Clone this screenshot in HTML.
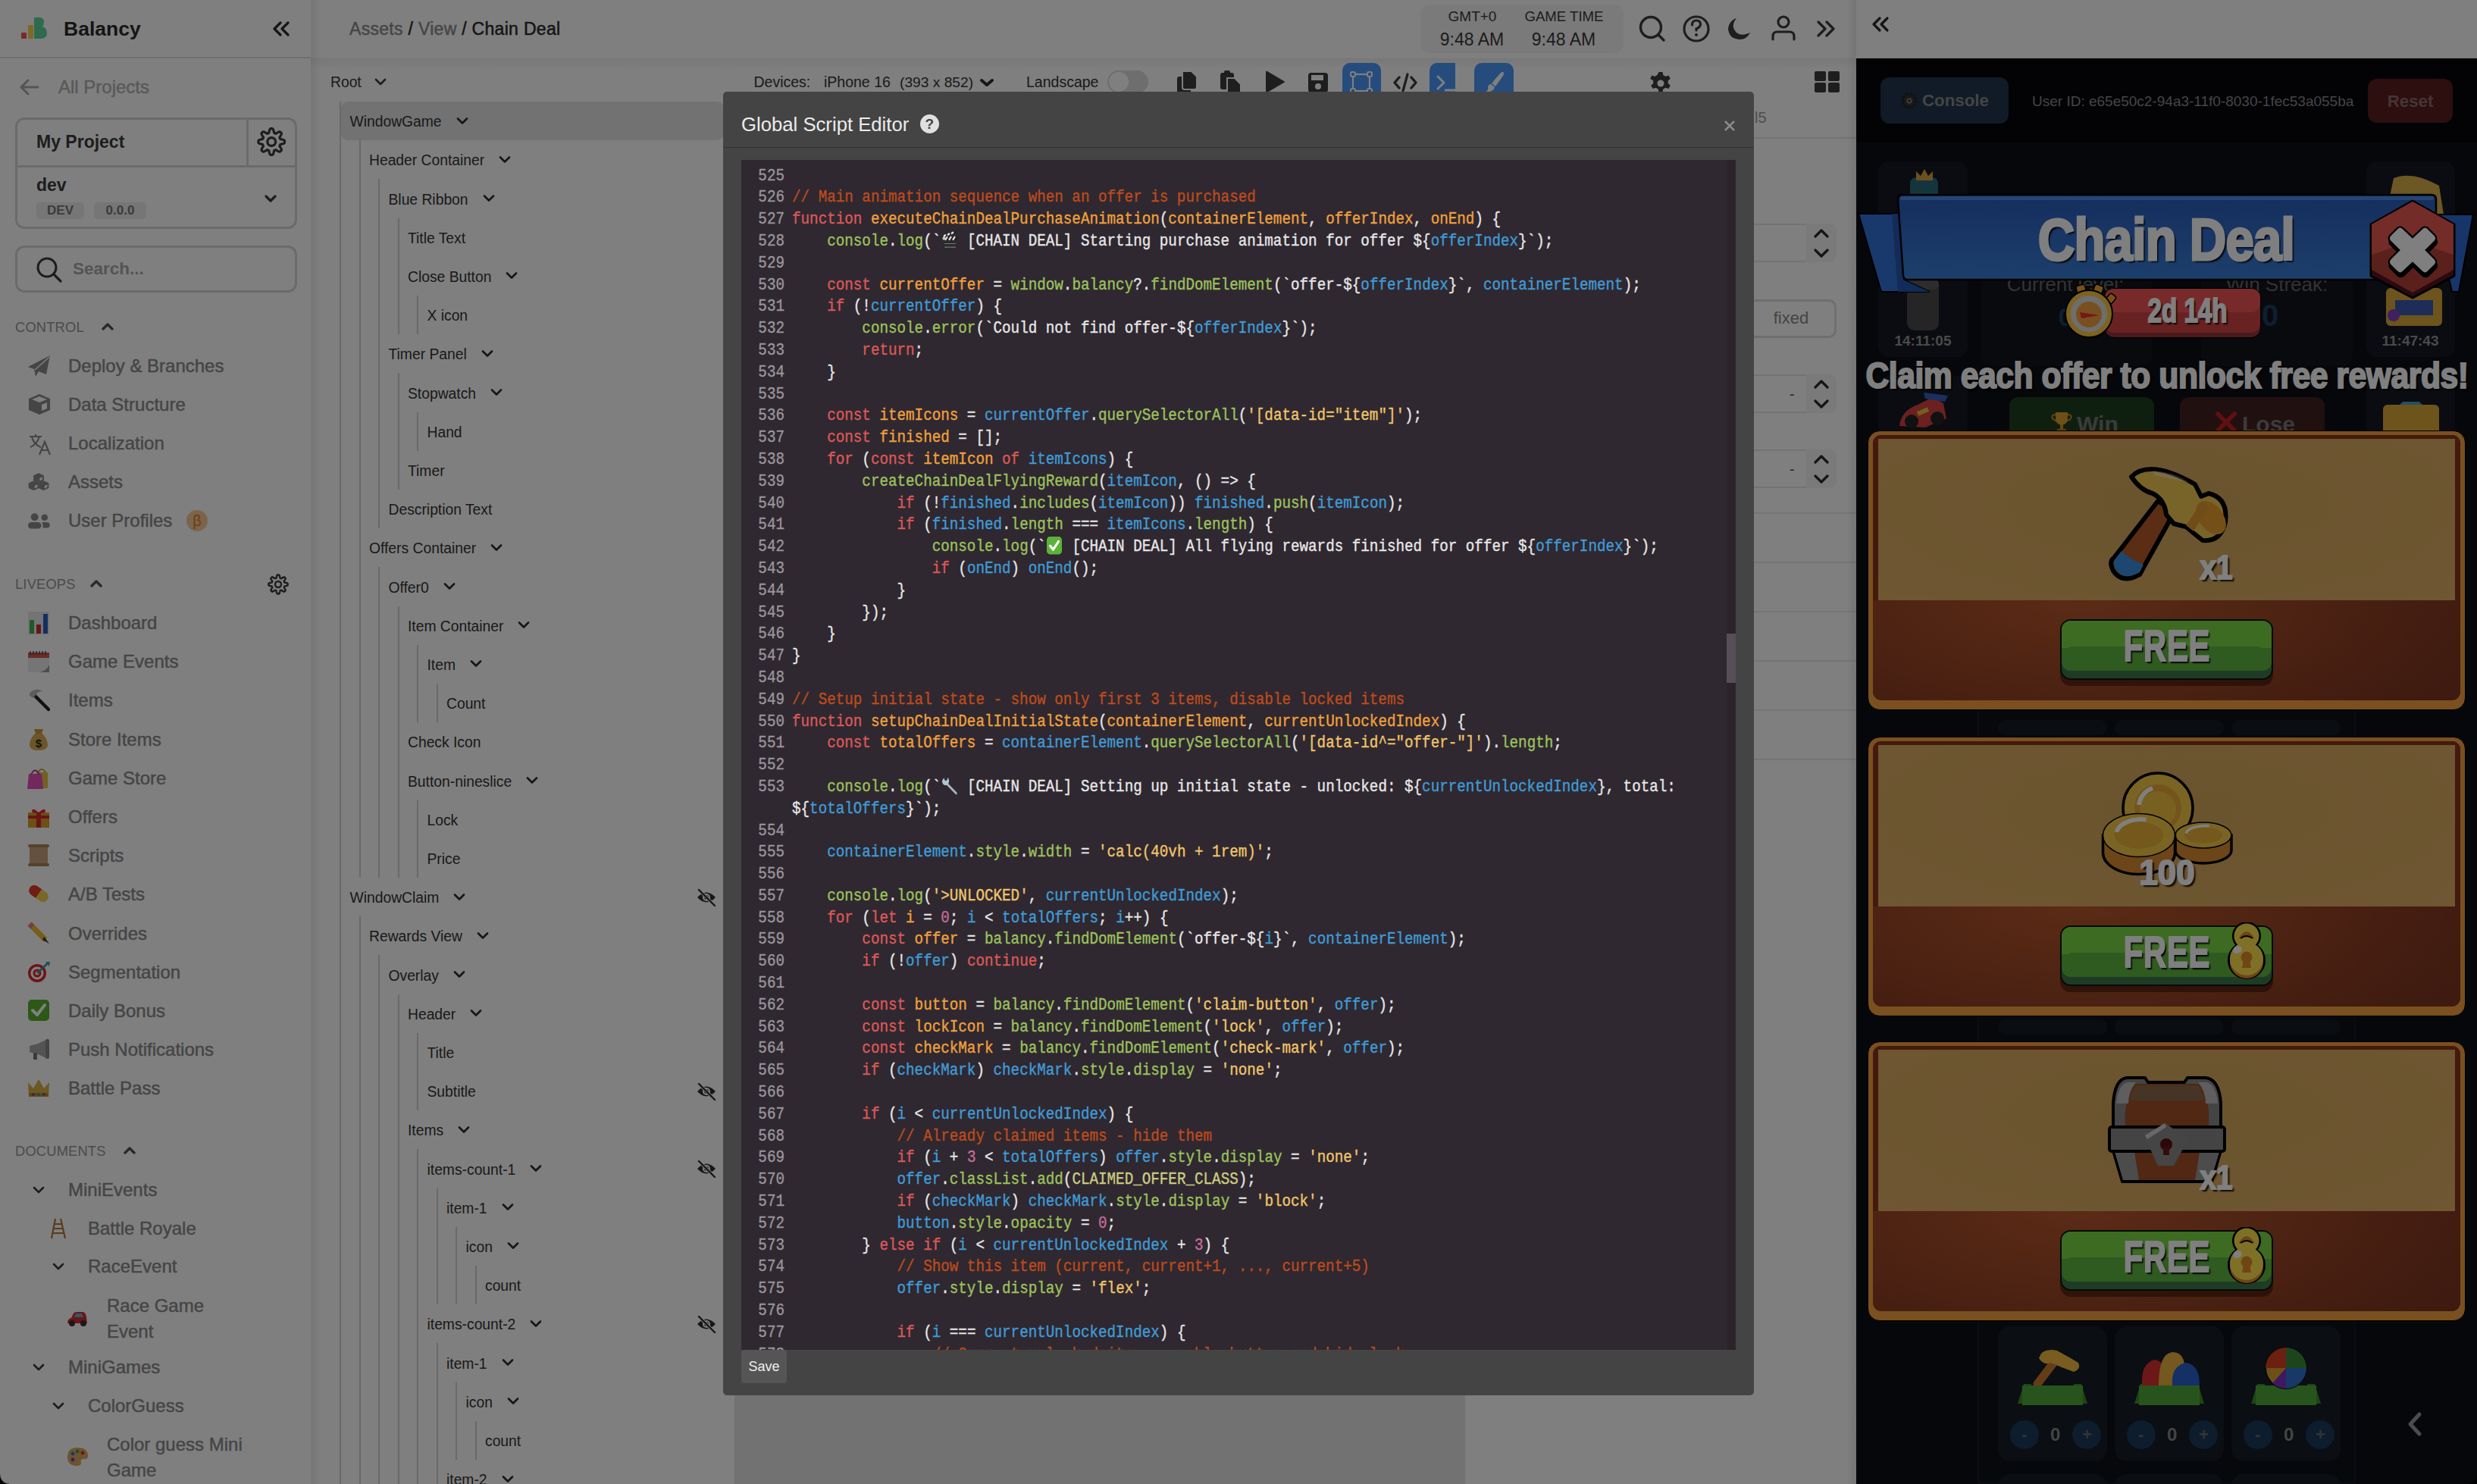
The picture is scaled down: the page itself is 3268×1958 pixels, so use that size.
<!DOCTYPE html>
<html><head><meta charset="utf-8">
<style>
*{box-sizing:border-box;margin:0;padding:0}
html,body{width:3268px;height:1958px;overflow:hidden;background:#000}
body{position:relative;font-family:"Liberation Sans",sans-serif;color:#333}
.abs{position:absolute}
/* modal */
#overlay{position:absolute;left:0;top:0;width:3268px;height:1958px;background:rgba(0,0,0,.5)}
#modal{position:absolute;left:954px;top:121px;width:1360px;height:1720px;background:#444;border-radius:5px}
#mhead{position:absolute;left:0;top:0;width:1360px;height:74px;border-bottom:1.5px solid #333}
#mtitle{position:absolute;left:24px;top:27.6px;font-size:25.7px;line-height:31px;color:#ececec;white-space:nowrap}
#mhelp{position:absolute;left:259.7px;top:29.7px;width:25px;height:25px;border-radius:50%;background:#e0e0e0;color:#444;font-weight:700;font-size:19px;line-height:26px;text-align:center}
#mclose{position:absolute;left:1320px;top:37px;width:16px;height:16px}
#code{position:absolute;left:24px;top:90px;width:1312px;height:1570px;background:#2f2830;overflow:hidden}
#cscroll{position:absolute;left:1300px;top:0;width:12px;height:1570px;background:#2b242a}
#cthumb{position:absolute;left:1300px;top:625px;width:12px;height:65px;background:#564f57}
#lines{position:absolute;left:0;top:6.6px;width:1300px}
.cl{position:relative;height:28.8px;line-height:28.8px;transform:scaleY(1.17);font-family:"Liberation Mono",monospace;font-size:19.24px;color:#e6e6e6;white-space:pre;-webkit-text-stroke:0.35px}
.ln{position:absolute;left:0;width:57px;text-align:right;color:#9b949c}
.cx{position:absolute;left:67px}
.tc{color:#bd4b1d}.tk{color:#dc5858}.td{color:#f0a03c}.tf{color:#9cc15c}.tv{color:#3f9bd6}.ts{color:#f0c46a}.tn{color:#c46b98}.tC{color:#cdcb80}
.em{display:inline-block;width:23.09px;height:20px;vertical-align:-3px;text-align:center}
.em svg{display:block;margin:0 auto}
#save{position:absolute;left:24px;top:1660px;width:60px;height:44px;background:#555;border-radius:4px;color:#eee;font-size:18px;line-height:44px;text-align:center}
</style></head>
<body>
<style>
#sb{position:absolute;left:0;top:0;width:410px;height:1958px;background:#fff;overflow:hidden}
#sb .t{position:absolute;white-space:nowrap;font-size:24px;line-height:30px;color:#8a8a8a;-webkit-text-stroke:0.45px}
#sb .hd{position:absolute;white-space:nowrap;font-size:18.3px;line-height:24px;color:#969696;letter-spacing:0.2px}
#sb .ic{position:absolute;width:30px;height:30px}
.box{position:absolute;border:3px solid #d6d6d6;border-radius:12px}
.badge{position:absolute;height:22px;background:#ececec;border-radius:5px;font-weight:700;font-size:17px;line-height:22px;color:#777;text-align:center}
</style>
<div id="sb">
  <div class="abs" style="left:0;top:75px;width:410px;height:2px;background:#dedede"></div>
  <!-- logo -->
  <div class="abs" style="left:28px;top:43px;width:7px;height:8px;background:#f25558;border-radius:1px"></div>
  <div class="abs" style="left:37px;top:33px;width:6.5px;height:18px;background:#ffd04c;border-radius:1px"></div>
  <svg class="abs" style="left:45px;top:23px" width="18" height="28" viewBox="0 0 18 28"><path d="M0 1 Q0 0 1 0 L7 0 Q13 0 13 6 Q13 10 11 12 Q17 14 17 20 Q17 28 9 28 L1 28 Q0 28 0 27Z" fill="#5ed49e"/></svg>
  <div class="abs" style="left:84px;top:21px;font-size:26.5px;line-height:34px;font-weight:700;color:#2a2a2a;white-space:nowrap">Balancy</div>
  <svg class="abs" style="left:359px;top:28px" width="24" height="20" viewBox="0 0 24 20"><path d="M11 2 L3 10 L11 18 M21 2 L13 10 L21 18" stroke="#2a2a2a" stroke-width="3.2" fill="none" stroke-linecap="round" stroke-linejoin="round"/></svg>
  <!-- all projects -->
  <svg class="abs" style="left:26px;top:104px" width="26" height="22" viewBox="0 0 26 22"><path d="M24 11 H3 M11 2 L2 11 L11 20" stroke="#aaa" stroke-width="3" fill="none" stroke-linecap="round" stroke-linejoin="round"/></svg>
  <div class="t" style="left:77px;top:100px;color:#b2b2b2">All Projects</div>
  <!-- project box -->
  <div class="box" style="left:20px;top:155px;width:372px;height:147px"></div>
  <div class="abs" style="left:20px;top:218px;width:372px;height:3px;background:#d6d6d6"></div>
  <div class="abs" style="left:325px;top:155px;width:3px;height:64px;background:#d6d6d6"></div>
  <div class="abs" style="left:48px;top:172px;font-size:23px;line-height:30px;font-weight:700;color:#3a3a3a;white-space:nowrap">My Project</div>
  <svg class="abs" style="left:338px;top:167px" width="40" height="40" viewBox="0 0 40 40"><path d="M20.20 2.70 L20.65 2.71 L21.11 2.72 L21.56 2.75 L21.98 3.05 L22.35 3.70 L22.66 4.44 L22.94 5.23 L23.17 6.04 L23.36 6.83 L23.53 7.58 L23.68 8.25 L23.91 8.59 L24.21 8.69 L24.50 8.80 L24.79 8.91 L25.08 9.04 L25.37 9.17 L25.65 9.31 L26.05 9.23 L26.63 8.86 L27.28 8.45 L27.98 8.03 L28.71 7.62 L29.46 7.25 L30.21 6.96 L30.93 6.75 L31.44 6.84 L31.78 7.14 L32.11 7.45 L32.43 7.77 L32.75 8.09 L33.06 8.42 L33.36 8.76 L33.45 9.27 L33.24 9.99 L32.95 10.74 L32.58 11.49 L32.17 12.22 L31.75 12.92 L31.34 13.57 L30.97 14.15 L30.89 14.55 L31.03 14.83 L31.16 15.12 L31.29 15.41 L31.40 15.70 L31.51 15.99 L31.61 16.29 L31.95 16.52 L32.62 16.67 L33.37 16.84 L34.16 17.03 L34.97 17.26 L35.76 17.54 L36.50 17.85 L37.15 18.22 L37.45 18.64 L37.48 19.09 L37.49 19.55 L37.50 20.00 L37.49 20.45 L37.48 20.91 L37.45 21.36 L37.15 21.78 L36.50 22.15 L35.76 22.46 L34.97 22.74 L34.16 22.97 L33.37 23.16 L32.62 23.33 L31.95 23.48 L31.61 23.71 L31.51 24.01 L31.40 24.30 L31.29 24.59 L31.16 24.88 L31.03 25.17 L30.89 25.45 L30.97 25.85 L31.34 26.43 L31.75 27.08 L32.17 27.78 L32.58 28.51 L32.95 29.26 L33.24 30.01 L33.45 30.73 L33.36 31.24 L33.06 31.58 L32.75 31.91 L32.43 32.23 L32.11 32.55 L31.78 32.86 L31.44 33.16 L30.93 33.25 L30.21 33.04 L29.46 32.75 L28.71 32.38 L27.98 31.97 L27.28 31.55 L26.63 31.14 L26.05 30.77 L25.65 30.69 L25.37 30.83 L25.08 30.96 L24.79 31.09 L24.50 31.20 L24.21 31.31 L23.91 31.41 L23.68 31.75 L23.53 32.42 L23.36 33.17 L23.17 33.96 L22.94 34.77 L22.66 35.56 L22.35 36.30 L21.98 36.95 L21.56 37.25 L21.11 37.28 L20.65 37.29 L20.20 37.30 L19.75 37.29 L19.29 37.28 L18.84 37.25 L18.42 36.95 L18.05 36.30 L17.74 35.56 L17.46 34.77 L17.23 33.96 L17.04 33.17 L16.87 32.42 L16.72 31.75 L16.49 31.41 L16.19 31.31 L15.90 31.20 L15.61 31.09 L15.32 30.96 L15.03 30.83 L14.75 30.69 L14.35 30.77 L13.77 31.14 L13.12 31.55 L12.42 31.97 L11.69 32.38 L10.94 32.75 L10.19 33.04 L9.47 33.25 L8.96 33.16 L8.62 32.86 L8.29 32.55 L7.97 32.23 L7.65 31.91 L7.34 31.58 L7.04 31.24 L6.95 30.73 L7.16 30.01 L7.45 29.26 L7.82 28.51 L8.23 27.78 L8.65 27.08 L9.06 26.43 L9.43 25.85 L9.51 25.45 L9.37 25.17 L9.24 24.88 L9.11 24.59 L9.00 24.30 L8.89 24.01 L8.79 23.71 L8.45 23.48 L7.78 23.33 L7.03 23.16 L6.24 22.97 L5.43 22.74 L4.64 22.46 L3.90 22.15 L3.25 21.78 L2.95 21.36 L2.92 20.91 L2.91 20.45 L2.90 20.00 L2.91 19.55 L2.92 19.09 L2.95 18.64 L3.25 18.22 L3.90 17.85 L4.64 17.54 L5.43 17.26 L6.24 17.03 L7.03 16.84 L7.78 16.67 L8.45 16.52 L8.79 16.29 L8.89 15.99 L9.00 15.70 L9.11 15.41 L9.24 15.12 L9.37 14.83 L9.51 14.55 L9.43 14.15 L9.06 13.57 L8.65 12.92 L8.23 12.22 L7.82 11.49 L7.45 10.74 L7.16 9.99 L6.95 9.27 L7.04 8.76 L7.34 8.42 L7.65 8.09 L7.97 7.77 L8.29 7.45 L8.62 7.14 L8.96 6.84 L9.47 6.75 L10.19 6.96 L10.94 7.25 L11.69 7.62 L12.42 8.03 L13.12 8.45 L13.77 8.86 L14.35 9.23 L14.75 9.31 L15.03 9.17 L15.32 9.04 L15.61 8.91 L15.90 8.80 L16.19 8.69 L16.49 8.59 L16.72 8.25 L16.87 7.58 L17.04 6.83 L17.23 6.04 L17.46 5.23 L17.74 4.44 L18.05 3.70 L18.42 3.05 L18.84 2.75 L19.29 2.72 L19.75 2.71Z" fill="none" stroke="#3a3a3a" stroke-width="3.2" stroke-linejoin="round"/><circle cx="20.2" cy="20" r="5.4" fill="none" stroke="#3a3a3a" stroke-width="3.2"/></svg>
  <div class="abs" style="left:48px;top:229px;font-size:23px;line-height:30px;font-weight:700;color:#3a3a3a;white-space:nowrap">dev</div>
  <div class="badge" style="left:48px;top:267px;width:63px">DEV</div>
  <div class="badge" style="left:124px;top:267px;width:69px">0.0.0</div>
  <svg class="abs" style="left:349px;top:256px" width="16" height="12" viewBox="0 0 16 12"><path d="M2 3 L8 9 L14 3" stroke="#3a3a3a" stroke-width="3.2" fill="none" stroke-linecap="round" stroke-linejoin="round"/></svg>
  <!-- search -->
  <div class="box" style="left:20px;top:324px;width:372px;height:62px"></div>
  <svg class="abs" style="left:47px;top:338px" width="36" height="36" viewBox="0 0 36 36"><circle cx="15" cy="15" r="12" stroke="#3a3a3a" stroke-width="3" fill="none"/><path d="M24 24 L33 33" stroke="#3a3a3a" stroke-width="3.2" stroke-linecap="round"/></svg>
  <div class="abs" style="left:96px;top:340px;font-size:22.5px;line-height:30px;font-weight:700;color:#a8a8a8;white-space:nowrap">Search...</div>
  <!-- CONTROL -->
  <div class="hd" style="left:20px;top:420px">CONTROL</div>
  <svg class="abs" style="left:134px;top:425px" width="16" height="12" viewBox="0 0 16 12"><path d="M2 9 L8 3 L14 9" stroke="#555" stroke-width="3.4" fill="none" stroke-linecap="round" stroke-linejoin="round"/></svg>
  <!-- control items -->
  <svg class="abs" style="left:37px;top:468px" width="30" height="30" viewBox="0 0 30 30"><path d="M29 1 L0 16 L8 19 L10 29 L14 22 L24 26Z" fill="#8a8a8a"/><path d="M28 3 L9 20" stroke="#fff" stroke-width="1.5"/></svg>
  <div class="t" style="left:90px;top:468px">Deploy &amp; Branches</div>
  <svg class="abs" style="left:37px;top:519px" width="30" height="29" viewBox="0 0 30 29"><path d="M15 1 L29 7 L29 22 L15 28 L1 22 L1 7Z" fill="#8a8a8a"/><path d="M5 8 L15 4 L25 8 L15 12Z" fill="#fff"/><path d="M18 15 L25 12 L25 20 L18 23Z" fill="#fff"/></svg>
  <div class="t" style="left:90px;top:519px">Data Structure</div>
  <svg class="abs" style="left:37px;top:570px" width="32" height="32" viewBox="0 0 32 32"><path d="M2 6 H18 M10 3 V6 M5 6 Q7 16 17 20 M15 6 Q12 16 3 20" stroke="#8a8a8a" stroke-width="2.2" fill="none"/><path d="M15 30 L22 13 L29 30 M18 24 H26" stroke="#8a8a8a" stroke-width="2.2" fill="none"/></svg>
  <div class="t" style="left:90px;top:570px">Localization</div>
  <svg class="abs" style="left:37px;top:623px" width="28" height="25" viewBox="0 0 28 25"><path d="M14 1.7000000000000002 L20.4 4.6 L20.4 10.7 L14 13.6 L7.6 10.7 L7.6 4.6Z" fill="#8a8a8a" stroke="#8a8a8a" stroke-width="1" stroke-linejoin="round"/><path d="M15.3 7.9 L18.8 6.3 L18.8 9.8 L15.3 11.4Z" fill="#fff"/><path d="M7.5 11.7 L13.9 14.6 L13.9 20.7 L7.5 23.6 L1.0999999999999996 20.7 L1.0999999999999996 14.6Z" fill="#8a8a8a" stroke="#8a8a8a" stroke-width="1" stroke-linejoin="round"/><path d="M8.8 17.9 L12.3 16.3 L12.3 19.8 L8.8 21.4Z" fill="#fff"/><path d="M20.5 11.7 L26.9 14.6 L26.9 20.7 L20.5 23.6 L14.1 20.7 L14.1 14.6Z" fill="#8a8a8a" stroke="#8a8a8a" stroke-width="1" stroke-linejoin="round"/><path d="M21.8 17.9 L25.3 16.3 L25.3 19.8 L21.8 21.4Z" fill="#fff"/></svg>
  <div class="t" style="left:90px;top:621px">Assets</div>
  <svg class="abs" style="left:36px;top:676px" width="32" height="23" viewBox="0 0 32 23"><circle cx="9.7" cy="6.2" r="5" fill="#8a8a8a"/><circle cx="22.8" cy="6.7" r="4.3" fill="#8a8a8a"/><rect x="1" y="13" width="17.5" height="8.6" rx="4.3" fill="#8a8a8a"/><path d="M19.5 13 L25.5 13 Q29.7 13 29.7 17 Q29.7 20.5 25.5 20.5 L20.5 20.5 Q21 17 19.5 13Z" fill="#8a8a8a"/></svg>
  <div class="t" style="left:90px;top:672px">User Profiles</div>
  <div class="abs" style="left:246px;top:673px;width:28px;height:28px;border-radius:50%;background:#f8c894;color:#d8782a;font-size:20px;line-height:28px;text-align:center">β</div>
  <!-- LIVEOPS -->
  <div class="hd" style="left:20px;top:759px">LIVEOPS</div>
  <svg class="abs" style="left:119px;top:764px" width="16" height="12" viewBox="0 0 16 12"><path d="M2 9 L8 3 L14 9" stroke="#555" stroke-width="3.4" fill="none" stroke-linecap="round" stroke-linejoin="round"/></svg>
  <svg class="abs" style="left:351.5px;top:756px" width="30" height="30" viewBox="0 0 30 30"><path d="M15.00 2.40 L15.33 2.40 L15.66 2.42 L15.99 2.44 L16.30 2.66 L16.56 3.15 L16.79 3.71 L16.98 4.30 L17.15 4.91 L17.28 5.50 L17.39 6.07 L17.50 6.57 L17.66 6.82 L17.87 6.89 L18.08 6.97 L18.29 7.05 L18.50 7.14 L18.70 7.24 L18.90 7.34 L19.20 7.27 L19.62 6.99 L20.10 6.67 L20.62 6.35 L21.16 6.03 L21.72 5.75 L22.27 5.52 L22.81 5.36 L23.18 5.42 L23.43 5.64 L23.67 5.86 L23.91 6.09 L24.14 6.33 L24.36 6.57 L24.58 6.82 L24.64 7.19 L24.48 7.73 L24.25 8.28 L23.97 8.84 L23.65 9.38 L23.33 9.90 L23.01 10.37 L22.73 10.80 L22.66 11.10 L22.76 11.30 L22.86 11.50 L22.95 11.71 L23.03 11.92 L23.11 12.13 L23.18 12.34 L23.43 12.50 L23.93 12.61 L24.50 12.72 L25.09 12.85 L25.70 13.02 L26.29 13.21 L26.85 13.44 L27.34 13.70 L27.56 14.01 L27.58 14.34 L27.60 14.67 L27.60 15.00 L27.60 15.33 L27.58 15.66 L27.56 15.99 L27.34 16.30 L26.85 16.56 L26.29 16.79 L25.70 16.98 L25.09 17.15 L24.50 17.28 L23.93 17.39 L23.43 17.50 L23.18 17.66 L23.11 17.87 L23.03 18.08 L22.95 18.29 L22.86 18.50 L22.76 18.70 L22.66 18.90 L22.73 19.20 L23.01 19.62 L23.33 20.10 L23.65 20.62 L23.97 21.16 L24.25 21.72 L24.48 22.27 L24.64 22.81 L24.58 23.18 L24.36 23.43 L24.14 23.67 L23.91 23.91 L23.67 24.14 L23.43 24.36 L23.18 24.58 L22.81 24.64 L22.27 24.48 L21.72 24.25 L21.16 23.97 L20.62 23.65 L20.10 23.33 L19.62 23.01 L19.20 22.73 L18.90 22.66 L18.70 22.76 L18.50 22.86 L18.29 22.95 L18.08 23.03 L17.87 23.11 L17.66 23.18 L17.50 23.43 L17.39 23.93 L17.28 24.50 L17.15 25.09 L16.98 25.70 L16.79 26.29 L16.56 26.85 L16.30 27.34 L15.99 27.56 L15.66 27.58 L15.33 27.60 L15.00 27.60 L14.67 27.60 L14.34 27.58 L14.01 27.56 L13.70 27.34 L13.44 26.85 L13.21 26.29 L13.02 25.70 L12.85 25.09 L12.72 24.50 L12.61 23.93 L12.50 23.43 L12.34 23.18 L12.13 23.11 L11.92 23.03 L11.71 22.95 L11.50 22.86 L11.30 22.76 L11.10 22.66 L10.80 22.73 L10.38 23.01 L9.90 23.33 L9.38 23.65 L8.84 23.97 L8.28 24.25 L7.73 24.48 L7.19 24.64 L6.82 24.58 L6.57 24.36 L6.33 24.14 L6.09 23.91 L5.86 23.67 L5.64 23.43 L5.42 23.18 L5.36 22.81 L5.52 22.27 L5.75 21.72 L6.03 21.16 L6.35 20.62 L6.67 20.10 L6.99 19.63 L7.27 19.20 L7.34 18.90 L7.24 18.70 L7.14 18.50 L7.05 18.29 L6.97 18.08 L6.89 17.87 L6.82 17.66 L6.57 17.50 L6.07 17.39 L5.50 17.28 L4.91 17.15 L4.30 16.98 L3.71 16.79 L3.15 16.56 L2.66 16.30 L2.44 15.99 L2.42 15.66 L2.40 15.33 L2.40 15.00 L2.40 14.67 L2.42 14.34 L2.44 14.01 L2.66 13.70 L3.15 13.44 L3.71 13.21 L4.30 13.02 L4.91 12.85 L5.50 12.72 L6.07 12.61 L6.57 12.50 L6.82 12.34 L6.89 12.13 L6.97 11.92 L7.05 11.71 L7.14 11.50 L7.24 11.30 L7.34 11.10 L7.27 10.80 L6.99 10.37 L6.67 9.90 L6.35 9.38 L6.03 8.84 L5.75 8.28 L5.52 7.73 L5.36 7.19 L5.42 6.82 L5.64 6.57 L5.86 6.33 L6.09 6.09 L6.33 5.86 L6.57 5.64 L6.82 5.42 L7.19 5.36 L7.73 5.52 L8.28 5.75 L8.84 6.03 L9.38 6.35 L9.90 6.67 L10.38 6.99 L10.80 7.27 L11.10 7.34 L11.30 7.24 L11.50 7.14 L11.71 7.05 L11.92 6.97 L12.13 6.89 L12.34 6.82 L12.50 6.57 L12.61 6.07 L12.72 5.50 L12.85 4.91 L13.02 4.30 L13.21 3.71 L13.44 3.15 L13.70 2.66 L14.01 2.44 L14.34 2.42 L14.67 2.40Z" fill="none" stroke="#3a3a3a" stroke-width="2.5" stroke-linejoin="round"/><circle cx="15" cy="15" r="4" fill="none" stroke="#3a3a3a" stroke-width="2.5"/></svg>
  <svg class="abs" style="left:36px;top:806px" width="30" height="32" viewBox="0 0 30 32"><rect x="1" y="1" width="28" height="30" fill="#e8e8ea"/><rect x="3" y="12" width="6" height="18" fill="#3fb34f"/><rect x="12" y="18" width="6" height="12" fill="#d6282a"/><rect x="21" y="4" width="6" height="26" fill="#2a5cc8"/></svg>
<div class="t" style="left:90px;top:807.0px">Dashboard</div>
<svg class="abs" style="left:36px;top:857px" width="30" height="32" viewBox="0 0 30 32"><rect x="1" y="4" width="28" height="26" fill="#eaeaea"/><rect x="1" y="4" width="28" height="7" fill="#d65555"/><path d="M4 2v5M8 2v5M12 2v5M16 2v5M20 2v5M24 2v5" stroke="#444" stroke-width="1.4"/><path d="M16 30 Q26 28 29 20 L29 30Z" fill="#999"/></svg>
<div class="t" style="left:90px;top:858.2px">Game Events</div>
<svg class="abs" style="left:36px;top:908px" width="30" height="32" viewBox="0 0 30 32"><path d="M9 9 L28 28" stroke="#222" stroke-width="4.5" stroke-linecap="round"/><path d="M3 10 Q2 5 8 3 Q14 0 20 4 Q14 4 12 8 L8 13Z" fill="#b8b8b8"/></svg>
<div class="t" style="left:90px;top:909.4px">Items</div>
<svg class="abs" style="left:36px;top:960px" width="30" height="32" viewBox="0 0 30 32"><path d="M10 8 Q4 14 3 22 Q3 30 15 30 Q27 30 27 22 Q26 14 20 8Z" fill="#d8aa50"/><path d="M9 2 L21 2 L19 8 L11 8Z" fill="#c89840"/><text x="15" y="26" font-size="15" font-weight="700" text-anchor="middle" fill="#222" font-family="Liberation Sans">$</text></svg>
<div class="t" style="left:90px;top:960.6px">Store Items</div>
<svg class="abs" style="left:36px;top:1011px" width="30" height="32" viewBox="0 0 30 32"><rect x="12" y="8" width="15" height="21" fill="#e8c040"/><path d="M14 8 Q19 0 24 8" stroke="#c09030" stroke-width="1.6" fill="none"/><path d="M2 10 L19 10 L21 30 L0 30Z" fill="#e250b8"/><path d="M5 11 Q10 0 16 11" stroke="#b83090" stroke-width="1.8" fill="none"/></svg>
<div class="t" style="left:90px;top:1011.8px">Game Store</div>
<svg class="abs" style="left:36px;top:1062px" width="30" height="32" viewBox="0 0 30 32"><rect x="1" y="10" width="28" height="20" fill="#d8a028"/><rect x="12" y="10" width="6" height="20" fill="#d02a2a"/><rect x="1" y="14" width="28" height="4" fill="#d02a2a"/><path d="M15 10 Q6 2 6 9 Q8 12 15 10 Q24 2 24 9 Q22 12 15 10Z" fill="#e03030"/></svg>
<div class="t" style="left:90px;top:1063.0px">Offers</div>
<svg class="abs" style="left:36px;top:1113px" width="30" height="32" viewBox="0 0 30 32"><rect x="3" y="3" width="24" height="25" fill="#c8a47c"/><rect x="1" y="1" width="28" height="4" rx="2" fill="#a88458"/><rect x="1" y="26" width="28" height="4" rx="2" fill="#a88458"/></svg>
<div class="t" style="left:90px;top:1114.2px">Scripts</div>
<svg class="abs" style="left:36px;top:1164px" width="30" height="32" viewBox="0 0 30 32"><g transform="rotate(35 15 15)"><rect x="1" y="8" width="28" height="14" rx="7" fill="#f0d050"/><path d="M8 8 L15 8 L15 22 L8 22 A7 7 0 0 1 8 8Z" fill="#e03a2a"/></g></svg>
<div class="t" style="left:90px;top:1165.4px">A/B Tests</div>
<svg class="abs" style="left:36px;top:1216px" width="30" height="32" viewBox="0 0 30 32"><path d="M4 4 L24 24" stroke="#f0b830" stroke-width="7"/><path d="M22 20 L29 29 L20 24Z" fill="#333"/><path d="M3 3 L7 7" stroke="#e88080" stroke-width="7"/></svg>
<div class="t" style="left:90px;top:1216.6px">Overrides</div>
<svg class="abs" style="left:36px;top:1267px" width="30" height="32" viewBox="0 0 30 32"><circle cx="13" cy="17" r="12" fill="#d8282a"/><circle cx="13" cy="17" r="8.5" fill="#fff"/><circle cx="13" cy="17" r="5.5" fill="#d8282a"/><circle cx="13" cy="17" r="2.5" fill="#fff"/><path d="M13 17 L28 3" stroke="#3a8aa0" stroke-width="2.5"/><path d="M24 2 L30 2 L29 8Z" fill="#3aa0b8"/></svg>
<div class="t" style="left:90px;top:1267.8px">Segmentation</div>
<svg class="abs" style="left:36px;top:1318px" width="30" height="32" viewBox="0 0 30 32"><rect x="1" y="1" width="28" height="28" rx="5" fill="#58b030"/><path d="M7 15 L13 21 L23 8" stroke="#fff" stroke-width="4" fill="none" stroke-linecap="round" stroke-linejoin="round"/></svg>
<div class="t" style="left:90px;top:1319.0px">Daily Bonus</div>
<svg class="abs" style="left:36px;top:1369px" width="30" height="32" viewBox="0 0 30 32"><path d="M3 11 L14 8 L27 2 L27 28 L14 22 L3 19Z" fill="#a8a8a8"/><rect x="24" y="2" width="5" height="26" rx="2" fill="#888"/><rect x="8" y="20" width="5" height="9" fill="#777"/></svg>
<div class="t" style="left:90px;top:1370.2px">Push Notifications</div>
<svg class="abs" style="left:36px;top:1420px" width="30" height="32" viewBox="0 0 30 32"><path d="M2 26 L1 8 L8 16 L15 4 L22 16 L29 8 L28 26Z" fill="#d8b040"/><rect x="2" y="22" width="26" height="5" fill="#b89030"/><circle cx="8" cy="24" r="2" fill="#9040a0"/><circle cx="15" cy="24" r="2" fill="#30a080"/><circle cx="22" cy="24" r="2" fill="#9040a0"/></svg>
<div class="t" style="left:90px;top:1421.4px">Battle Pass</div>
  <!-- DOCUMENTS -->
  <div class="hd" style="left:20px;top:1507px">DOCUMENTS</div>
  <svg class="abs" style="left:163px;top:1512px" width="16" height="12" viewBox="0 0 16 12"><path d="M2 9 L8 3 L14 9" stroke="#555" stroke-width="3.4" fill="none" stroke-linecap="round" stroke-linejoin="round"/></svg>
  <svg class="abs" style="left:43px;top:1564px" width="16" height="12" viewBox="0 0 16 12"><path d="M2 3 L8 9 L14 3" stroke="#3a3a3a" stroke-width="2.6" fill="none" stroke-linecap="round" stroke-linejoin="round"/></svg>
<div class="t" style="left:90px;top:1555px">MiniEvents</div>
<svg class="abs" style="left:66px;top:1607px" width="22" height="28" viewBox="0 0 22 28"><path d="M7 1 L2 27 M14 1 L20 27 M5 8 H16 M4 14 H17 M3 20 H19" stroke="#b07838" stroke-width="2.2" fill="none"/></svg>
<div class="t" style="left:116px;top:1606px">Battle Royale</div>
<svg class="abs" style="left:69px;top:1665px" width="16" height="12" viewBox="0 0 16 12"><path d="M2 3 L8 9 L14 3" stroke="#3a3a3a" stroke-width="2.6" fill="none" stroke-linecap="round" stroke-linejoin="round"/></svg>
<div class="t" style="left:116px;top:1656px">RaceEvent</div>
<svg class="abs" style="left:88px;top:1728px" width="28" height="24" viewBox="0 0 28 24"><path d="M1 18 Q1 12 6 11 L9 5 Q10 3 14 3 L21 3 Q25 3 26 10 L27 18Z" fill="#d82a2a"/><path d="M10 10 L12 5 L20 5 L22 10Z" fill="#6aa8d8"/><circle cx="7" cy="18" r="4" fill="#333"/><circle cx="22" cy="18" r="4" fill="#333"/></svg>
<div class="t" style="left:141px;top:1706px;line-height:34px">Race Game<br>Event</div>
<svg class="abs" style="left:43px;top:1798px" width="16" height="12" viewBox="0 0 16 12"><path d="M2 3 L8 9 L14 3" stroke="#3a3a3a" stroke-width="2.6" fill="none" stroke-linecap="round" stroke-linejoin="round"/></svg>
<div class="t" style="left:90px;top:1789px">MiniGames</div>
<svg class="abs" style="left:69px;top:1849px" width="16" height="12" viewBox="0 0 16 12"><path d="M2 3 L8 9 L14 3" stroke="#3a3a3a" stroke-width="2.6" fill="none" stroke-linecap="round" stroke-linejoin="round"/></svg>
<div class="t" style="left:116px;top:1840px">ColorGuess</div>
<svg class="abs" style="left:88px;top:1908px" width="30" height="28" viewBox="0 0 30 28"><path d="M14 2 Q28 2 28 13 Q28 18 22 17 Q18 17 19 21 Q20 26 13 26 Q1 26 1 14 Q1 2 14 2Z" fill="#d8a860"/><circle cx="8" cy="10" r="2.4" fill="#3070d0"/><circle cx="14" cy="7" r="2.4" fill="#30a050"/><circle cx="21" cy="9" r="2.4" fill="#d03030"/><circle cx="8" cy="18" r="2.4" fill="#8030c0"/></svg>
<div class="t" style="left:141px;top:1889px;line-height:34px">Color guess Mini<br>Game</div>
</div>

<style>.chev{position:absolute}</style>
<div class="abs" style="left:410px;top:0;width:2039px;height:1958px;background:#fff"></div>
<div class="abs" style="left:969px;top:134px;width:964px;height:1824px;background:#e4e4e4"></div>
<div class="abs" style="left:410px;top:0;width:2039px;height:76px;background:#fff"></div>
<div class="abs" style="left:410px;top:77px;width:2039px;height:14px;background:linear-gradient(rgba(0,0,0,.06),rgba(0,0,0,0))"></div>
<div class="abs" style="left:410px;top:0;width:14px;height:1958px;background:linear-gradient(90deg,rgba(0,0,0,.07),rgba(0,0,0,0))"></div>
<div class="abs" style="left:461px;top:24.9px;font-size:23px;line-height:27.60px;color:#2a2a2a;font-weight:400;white-space:nowrap;-webkit-text-stroke:0.5px;letter-spacing:0.3px"><span style="color:#8c8c8c">Assets</span> / <span style="color:#8c8c8c">View</span> / Chain Deal</div>
<div class="abs" style="left:1874px;top:6px;width:268px;height:64px;background:#f5f5f5;border-radius:12px"></div>
<div class="abs" style="left:1642.5px;width:600px;text-align:center;top:10.8px;font-size:19px;line-height:22.80px;color:#3a3a3a;font-weight:400;white-space:nowrap;">GMT+0</div>
<div class="abs" style="left:1763.5px;width:600px;text-align:center;top:11.2px;font-size:18.6px;line-height:22.32px;color:#3a3a3a;font-weight:400;white-space:nowrap;">GAME TIME</div>
<div class="abs" style="left:1642px;width:600px;text-align:center;top:39.2px;font-size:23px;line-height:27.60px;color:#3a3a3a;font-weight:400;white-space:nowrap;">9:48 AM</div>
<div class="abs" style="left:1763px;width:600px;text-align:center;top:39.2px;font-size:23px;line-height:27.60px;color:#3a3a3a;font-weight:400;white-space:nowrap;">9:48 AM</div>
<svg class="abs" style="left:2160px;top:18px" width="40" height="40" viewBox="0 0 40 40"><circle cx="18" cy="18" r="13.5" stroke="#3c3c3c" stroke-width="3.4" fill="none"/><path d="M28 28 L35 35" stroke="#3c3c3c" stroke-width="3.4" stroke-linecap="round"/></svg>
<svg class="abs" style="left:2218px;top:18px" width="40" height="40" viewBox="0 0 40 40"><circle cx="20" cy="20" r="16" stroke="#3c3c3c" stroke-width="3.2" fill="none"/><path d="M14.5 15 Q14.5 9 20 9 Q25.5 9 25.5 14 Q25.5 17.5 20 20 L20 22" stroke="#3c3c3c" stroke-width="3.2" fill="none" stroke-linecap="round"/><circle cx="20" cy="28" r="2" fill="#3c3c3c"/></svg>
<svg class="abs" style="left:2278px;top:22px" width="34" height="32" viewBox="0 0 34 32"><path d="M13 2 Q5 12 12 20 Q19 27 31 21 Q26 31 16 30 Q3 29 2 16 Q3 5 13 2Z" fill="#3c3c3c"/></svg>
<svg class="abs" style="left:2336px;top:20px" width="34" height="36" viewBox="0 0 34 36"><circle cx="17" cy="9" r="7" stroke="#3c3c3c" stroke-width="3.2" fill="none"/><path d="M3 32 L3 28 Q3 22 9 22 L25 22 Q31 22 31 28 L31 32" stroke="#3c3c3c" stroke-width="3.2" fill="none" stroke-linecap="round"/></svg>
<svg class="abs" style="left:2396px;top:27px" width="28" height="22" viewBox="0 0 28 22"><path d="M3 2 L12 11 L3 20 M14 2 L23 11 L14 20" stroke="#3c3c3c" stroke-width="3.2" fill="none" stroke-linecap="round" stroke-linejoin="round"/></svg>
<div class="abs" style="left:436px;top:97.2px;font-size:19.3px;line-height:23.16px;color:#343434;font-weight:400;white-space:nowrap;">Root</div>
<svg class="abs" style="left:493px;top:102px" width="18" height="14" viewBox="0 0 18 14"><path d="M3 3 L9 9 L15 3" stroke="#3c3c3c" stroke-width="2.6" fill="none" stroke-linecap="round" stroke-linejoin="round"/></svg>
<div class="abs" style="left:994.5px;top:96.5px;font-size:19.5px;line-height:23.40px;color:#343434;font-weight:400;white-space:nowrap;">Devices:</div>
<div class="abs" style="left:1087px;top:96.5px;font-size:19.5px;line-height:23.40px;color:#343434;font-weight:400;white-space:nowrap;">iPhone 16</div>
<div class="abs" style="left:1187px;top:96.8px;font-size:19.2px;line-height:23.04px;color:#343434;font-weight:400;white-space:nowrap;">(393 x 852)</div>
<svg class="abs" style="left:1292px;top:103px" width="20" height="12" viewBox="0 0 20 12"><path d="M3 3 L10 9 L17 3" stroke="#2a2a2a" stroke-width="4" fill="none" stroke-linecap="round" stroke-linejoin="round"/></svg>
<div class="abs" style="left:1354px;top:96.5px;font-size:19.5px;line-height:23.40px;color:#343434;font-weight:400;white-space:nowrap;">Landscape</div>
<div class="abs" style="left:1461px;top:93px;width:54px;height:30px;border-radius:15px;background:#dcdcdc"></div>
<div class="abs" style="left:1463px;top:95px;width:26px;height:26px;border-radius:50%;background:#fff"></div>
<svg class="abs" style="left:1552px;top:93px" width="28" height="30" viewBox="0 0 28 30"><rect x="1" y="8" width="18" height="22" rx="3" fill="#3c3c3c"/><path d="M8 1 L20 1 L27 8 L27 22 Q27 25 24 25 L11 25 Q8 25 8 22Z" fill="#3c3c3c" stroke="#fff" stroke-width="2"/></svg>
<svg class="abs" style="left:1609px;top:93px" width="30" height="30" viewBox="0 0 30 30"><rect x="1" y="3" width="18" height="22" rx="3" fill="#3c3c3c"/><rect x="6" y="0" width="8" height="5" rx="2" fill="#3c3c3c"/><path d="M10 10 L20 10 L28 18 L28 30 L10 30Z" fill="#3c3c3c" stroke="#fff" stroke-width="2"/></svg>
<svg class="abs" style="left:1668px;top:93px" width="28" height="30" viewBox="0 0 28 30"><path d="M2 2 Q2 0 4 1 L26 14 Q28 15 26 16 L4 29 Q2 30 2 28Z" fill="#3c3c3c"/></svg>
<svg class="abs" style="left:1725px;top:95px" width="28" height="28" viewBox="0 0 28 28"><rect x="1" y="1" width="26" height="26" rx="4" fill="#3c3c3c"/><rect x="5" y="4" width="16" height="7" fill="#fff"/><circle cx="14" cy="19" r="4" fill="#fff"/></svg>
<div class="abs" style="left:1771px;top:83px;width:51px;height:60px;border-radius:10px;background:#4a99f8"></div>
<svg class="abs" style="left:1780px;top:93px" width="32" height="32" viewBox="0 0 32 32"><rect x="5" y="5" width="22" height="22" fill="none" stroke="#fff" stroke-width="2.2"/><g fill="#4a99f8" stroke="#fff" stroke-width="2"><rect x="2" y="2" width="6" height="6" rx="2"/><rect x="24" y="2" width="6" height="6" rx="2"/><rect x="2" y="24" width="6" height="6" rx="2"/><rect x="24" y="24" width="6" height="6" rx="2"/></g></svg>
<svg class="abs" style="left:1838px;top:96px" width="32" height="26" viewBox="0 0 32 26"><path d="M8 6 L2 13 L8 20 M24 6 L30 13 L24 20" stroke="#3c3c3c" stroke-width="3.4" fill="none" stroke-linecap="round" stroke-linejoin="round"/><path d="M19 2 L13 24" stroke="#3c3c3c" stroke-width="3.2" stroke-linecap="round"/></svg>
<div class="abs" style="left:1886px;top:83px;width:34px;height:60px;border-radius:10px 0 0 10px;background:#4a99f8"></div>
<svg class="abs" style="left:1894px;top:97px" width="26" height="28" viewBox="0 0 26 28"><path d="M3 4 L11 12 L3 20" stroke="#fff" stroke-width="3" fill="none" stroke-linecap="round" stroke-linejoin="round"/><path d="M12 22 L26 22" stroke="#fff" stroke-width="3"/></svg>
<div class="abs" style="left:1945px;top:83px;width:52px;height:60px;border-radius:10px;background:#4a99f8"></div>
<svg class="abs" style="left:1956px;top:93px" width="30" height="30" viewBox="0 0 30 30"><path d="M27 2 Q29 3 27 7 L17 21 L12 17 Q22 5 24 3 Q26 1 27 2Z" fill="#fff"/><path d="M11 18 L16 22 Q14 29 5 28 Q8 25 7 22 Q8 18 11 18Z" fill="#fff"/></svg>
<svg class="abs" style="left:2174px;top:93px" width="34" height="34" viewBox="0 0 34 34"><path fill="#3c3c3c" d="M14.5 1h5l.8 4.1a12 12 0 0 1 3.1 1.8l3.9-1.4 2.5 4.3-3.1 2.7a12 12 0 0 1 0 3.6l3.1 2.7-2.5 4.3-3.9-1.4a12 12 0 0 1-3.1 1.8l-.8 4.1h-5l-.8-4.1a12 12 0 0 1-3.1-1.8l-3.9 1.4-2.5-4.3 3.1-2.7a12 12 0 0 1 0-3.6L3.1 9.8l2.5-4.3 3.9 1.4a12 12 0 0 1 3.1-1.8z" transform="translate(0 1)"/><circle cx="17" cy="17" r="4.5" fill="#fff"/></svg>
<svg class="abs" style="left:2393px;top:93px" width="36" height="30" viewBox="0 0 36 30"><rect x="1" y="1" width="15" height="13" rx="2" fill="#3c3c3c"/><rect x="19" y="1" width="15" height="13" rx="2" fill="#3c3c3c"/><rect x="1" y="16" width="15" height="13" rx="2" fill="#3c3c3c"/><rect x="19" y="16" width="15" height="13" rx="2" fill="#3c3c3c"/></svg>
<div class="abs" style="left:449.5px;top:134px;width:505px;height:51px;background:#e4e4e4;border-radius:9px"></div>
<div class="abs" style="left:461.5px;top:149.2px;font-size:19.3px;line-height:23.16px;color:#333;font-weight:400;white-space:nowrap;">WindowGame</div>
<svg class="abs" style="left:602px;top:153px" width="16" height="13" viewBox="0 0 16 13"><path d="M2 3.5 L8 9.5 L14 3.5" stroke="#2e2e2e" stroke-width="2.7" fill="none" stroke-linecap="round" stroke-linejoin="round"/></svg>
<div class="abs" style="left:487.0px;top:200.4px;font-size:19.3px;line-height:23.16px;color:#333;font-weight:400;white-space:nowrap;">Header Container</div>
<svg class="abs" style="left:658px;top:204px" width="16" height="13" viewBox="0 0 16 13"><path d="M2 3.5 L8 9.5 L14 3.5" stroke="#2e2e2e" stroke-width="2.7" fill="none" stroke-linecap="round" stroke-linejoin="round"/></svg>
<div class="abs" style="left:512.5px;top:251.6px;font-size:19.3px;line-height:23.16px;color:#333;font-weight:400;white-space:nowrap;">Blue Ribbon</div>
<svg class="abs" style="left:637px;top:255px" width="16" height="13" viewBox="0 0 16 13"><path d="M2 3.5 L8 9.5 L14 3.5" stroke="#2e2e2e" stroke-width="2.7" fill="none" stroke-linecap="round" stroke-linejoin="round"/></svg>
<div class="abs" style="left:538.0px;top:302.8px;font-size:19.3px;line-height:23.16px;color:#333;font-weight:400;white-space:nowrap;">Title Text</div>
<div class="abs" style="left:538.0px;top:354.0px;font-size:19.3px;line-height:23.16px;color:#333;font-weight:400;white-space:nowrap;">Close Button</div>
<svg class="abs" style="left:667px;top:357px" width="16" height="13" viewBox="0 0 16 13"><path d="M2 3.5 L8 9.5 L14 3.5" stroke="#2e2e2e" stroke-width="2.7" fill="none" stroke-linecap="round" stroke-linejoin="round"/></svg>
<div class="abs" style="left:563.5px;top:405.2px;font-size:19.3px;line-height:23.16px;color:#333;font-weight:400;white-space:nowrap;">X icon</div>
<div class="abs" style="left:512.5px;top:456.4px;font-size:19.3px;line-height:23.16px;color:#333;font-weight:400;white-space:nowrap;">Timer Panel</div>
<svg class="abs" style="left:635px;top:460px" width="16" height="13" viewBox="0 0 16 13"><path d="M2 3.5 L8 9.5 L14 3.5" stroke="#2e2e2e" stroke-width="2.7" fill="none" stroke-linecap="round" stroke-linejoin="round"/></svg>
<div class="abs" style="left:538.0px;top:507.6px;font-size:19.3px;line-height:23.16px;color:#333;font-weight:400;white-space:nowrap;">Stopwatch</div>
<svg class="abs" style="left:647px;top:511px" width="16" height="13" viewBox="0 0 16 13"><path d="M2 3.5 L8 9.5 L14 3.5" stroke="#2e2e2e" stroke-width="2.7" fill="none" stroke-linecap="round" stroke-linejoin="round"/></svg>
<div class="abs" style="left:563.5px;top:558.8px;font-size:19.3px;line-height:23.16px;color:#333;font-weight:400;white-space:nowrap;">Hand</div>
<div class="abs" style="left:538.0px;top:610.0px;font-size:19.3px;line-height:23.16px;color:#333;font-weight:400;white-space:nowrap;">Timer</div>
<div class="abs" style="left:512.5px;top:661.2px;font-size:19.3px;line-height:23.16px;color:#333;font-weight:400;white-space:nowrap;">Description Text</div>
<div class="abs" style="left:487.0px;top:712.4px;font-size:19.3px;line-height:23.16px;color:#333;font-weight:400;white-space:nowrap;">Offers Container</div>
<svg class="abs" style="left:647px;top:716px" width="16" height="13" viewBox="0 0 16 13"><path d="M2 3.5 L8 9.5 L14 3.5" stroke="#2e2e2e" stroke-width="2.7" fill="none" stroke-linecap="round" stroke-linejoin="round"/></svg>
<div class="abs" style="left:512.5px;top:763.6px;font-size:19.3px;line-height:23.16px;color:#333;font-weight:400;white-space:nowrap;">Offer0</div>
<svg class="abs" style="left:585px;top:767px" width="16" height="13" viewBox="0 0 16 13"><path d="M2 3.5 L8 9.5 L14 3.5" stroke="#2e2e2e" stroke-width="2.7" fill="none" stroke-linecap="round" stroke-linejoin="round"/></svg>
<div class="abs" style="left:538.0px;top:814.8px;font-size:19.3px;line-height:23.16px;color:#333;font-weight:400;white-space:nowrap;">Item Container</div>
<svg class="abs" style="left:683px;top:818px" width="16" height="13" viewBox="0 0 16 13"><path d="M2 3.5 L8 9.5 L14 3.5" stroke="#2e2e2e" stroke-width="2.7" fill="none" stroke-linecap="round" stroke-linejoin="round"/></svg>
<div class="abs" style="left:563.5px;top:866.0px;font-size:19.3px;line-height:23.16px;color:#333;font-weight:400;white-space:nowrap;">Item</div>
<svg class="abs" style="left:620px;top:869px" width="16" height="13" viewBox="0 0 16 13"><path d="M2 3.5 L8 9.5 L14 3.5" stroke="#2e2e2e" stroke-width="2.7" fill="none" stroke-linecap="round" stroke-linejoin="round"/></svg>
<div class="abs" style="left:589.0px;top:917.2px;font-size:19.3px;line-height:23.16px;color:#333;font-weight:400;white-space:nowrap;">Count</div>
<div class="abs" style="left:538.0px;top:968.4px;font-size:19.3px;line-height:23.16px;color:#333;font-weight:400;white-space:nowrap;">Check Icon</div>
<div class="abs" style="left:538.0px;top:1019.6px;font-size:19.3px;line-height:23.16px;color:#333;font-weight:400;white-space:nowrap;">Button-nineslice</div>
<svg class="abs" style="left:694px;top:1023px" width="16" height="13" viewBox="0 0 16 13"><path d="M2 3.5 L8 9.5 L14 3.5" stroke="#2e2e2e" stroke-width="2.7" fill="none" stroke-linecap="round" stroke-linejoin="round"/></svg>
<div class="abs" style="left:563.5px;top:1070.8px;font-size:19.3px;line-height:23.16px;color:#333;font-weight:400;white-space:nowrap;">Lock</div>
<div class="abs" style="left:563.5px;top:1122.0px;font-size:19.3px;line-height:23.16px;color:#333;font-weight:400;white-space:nowrap;">Price</div>
<div class="abs" style="left:461.5px;top:1173.2px;font-size:19.3px;line-height:23.16px;color:#333;font-weight:400;white-space:nowrap;">WindowClaim</div>
<svg class="abs" style="left:598px;top:1177px" width="16" height="13" viewBox="0 0 16 13"><path d="M2 3.5 L8 9.5 L14 3.5" stroke="#2e2e2e" stroke-width="2.7" fill="none" stroke-linecap="round" stroke-linejoin="round"/></svg>
<svg class="abs" style="left:918px;top:1172px" width="28" height="24" viewBox="0 0 28 24"><path d="M2 12 Q14 -1 26 12 Q14 25 2 12Z" fill="#2e2e2e"/><circle cx="14" cy="12" r="5" fill="#fff"/><circle cx="14" cy="12" r="3" fill="#2e2e2e"/><path d="M4 2 L25 23" stroke="#fff" stroke-width="4"/><path d="M4 2 L25 23" stroke="#2e2e2e" stroke-width="2.4" stroke-linecap="round"/></svg>
<div class="abs" style="left:487.0px;top:1224.4px;font-size:19.3px;line-height:23.16px;color:#333;font-weight:400;white-space:nowrap;">Rewards View</div>
<svg class="abs" style="left:629px;top:1228px" width="16" height="13" viewBox="0 0 16 13"><path d="M2 3.5 L8 9.5 L14 3.5" stroke="#2e2e2e" stroke-width="2.7" fill="none" stroke-linecap="round" stroke-linejoin="round"/></svg>
<div class="abs" style="left:512.5px;top:1275.6px;font-size:19.3px;line-height:23.16px;color:#333;font-weight:400;white-space:nowrap;">Overlay</div>
<svg class="abs" style="left:598px;top:1279px" width="16" height="13" viewBox="0 0 16 13"><path d="M2 3.5 L8 9.5 L14 3.5" stroke="#2e2e2e" stroke-width="2.7" fill="none" stroke-linecap="round" stroke-linejoin="round"/></svg>
<div class="abs" style="left:538.0px;top:1326.8px;font-size:19.3px;line-height:23.16px;color:#333;font-weight:400;white-space:nowrap;">Header</div>
<svg class="abs" style="left:620px;top:1330px" width="16" height="13" viewBox="0 0 16 13"><path d="M2 3.5 L8 9.5 L14 3.5" stroke="#2e2e2e" stroke-width="2.7" fill="none" stroke-linecap="round" stroke-linejoin="round"/></svg>
<div class="abs" style="left:563.5px;top:1378.0px;font-size:19.3px;line-height:23.16px;color:#333;font-weight:400;white-space:nowrap;">Title</div>
<div class="abs" style="left:563.5px;top:1429.2px;font-size:19.3px;line-height:23.16px;color:#333;font-weight:400;white-space:nowrap;">Subtitle</div>
<svg class="abs" style="left:918px;top:1428px" width="28" height="24" viewBox="0 0 28 24"><path d="M2 12 Q14 -1 26 12 Q14 25 2 12Z" fill="#2e2e2e"/><circle cx="14" cy="12" r="5" fill="#fff"/><circle cx="14" cy="12" r="3" fill="#2e2e2e"/><path d="M4 2 L25 23" stroke="#fff" stroke-width="4"/><path d="M4 2 L25 23" stroke="#2e2e2e" stroke-width="2.4" stroke-linecap="round"/></svg>
<div class="abs" style="left:538.0px;top:1480.4px;font-size:19.3px;line-height:23.16px;color:#333;font-weight:400;white-space:nowrap;">Items</div>
<svg class="abs" style="left:604px;top:1484px" width="16" height="13" viewBox="0 0 16 13"><path d="M2 3.5 L8 9.5 L14 3.5" stroke="#2e2e2e" stroke-width="2.7" fill="none" stroke-linecap="round" stroke-linejoin="round"/></svg>
<div class="abs" style="left:563.5px;top:1531.6px;font-size:19.3px;line-height:23.16px;color:#333;font-weight:400;white-space:nowrap;">items-count-1</div>
<svg class="abs" style="left:699px;top:1535px" width="16" height="13" viewBox="0 0 16 13"><path d="M2 3.5 L8 9.5 L14 3.5" stroke="#2e2e2e" stroke-width="2.7" fill="none" stroke-linecap="round" stroke-linejoin="round"/></svg>
<svg class="abs" style="left:918px;top:1530px" width="28" height="24" viewBox="0 0 28 24"><path d="M2 12 Q14 -1 26 12 Q14 25 2 12Z" fill="#2e2e2e"/><circle cx="14" cy="12" r="5" fill="#fff"/><circle cx="14" cy="12" r="3" fill="#2e2e2e"/><path d="M4 2 L25 23" stroke="#fff" stroke-width="4"/><path d="M4 2 L25 23" stroke="#2e2e2e" stroke-width="2.4" stroke-linecap="round"/></svg>
<div class="abs" style="left:589.0px;top:1582.8px;font-size:19.3px;line-height:23.16px;color:#333;font-weight:400;white-space:nowrap;">item-1</div>
<svg class="abs" style="left:662px;top:1586px" width="16" height="13" viewBox="0 0 16 13"><path d="M2 3.5 L8 9.5 L14 3.5" stroke="#2e2e2e" stroke-width="2.7" fill="none" stroke-linecap="round" stroke-linejoin="round"/></svg>
<div class="abs" style="left:614.5px;top:1634.0px;font-size:19.3px;line-height:23.16px;color:#333;font-weight:400;white-space:nowrap;">icon</div>
<svg class="abs" style="left:669px;top:1637px" width="16" height="13" viewBox="0 0 16 13"><path d="M2 3.5 L8 9.5 L14 3.5" stroke="#2e2e2e" stroke-width="2.7" fill="none" stroke-linecap="round" stroke-linejoin="round"/></svg>
<div class="abs" style="left:640.0px;top:1685.2px;font-size:19.3px;line-height:23.16px;color:#333;font-weight:400;white-space:nowrap;">count</div>
<div class="abs" style="left:563.5px;top:1736.4px;font-size:19.3px;line-height:23.16px;color:#333;font-weight:400;white-space:nowrap;">items-count-2</div>
<svg class="abs" style="left:699px;top:1740px" width="16" height="13" viewBox="0 0 16 13"><path d="M2 3.5 L8 9.5 L14 3.5" stroke="#2e2e2e" stroke-width="2.7" fill="none" stroke-linecap="round" stroke-linejoin="round"/></svg>
<svg class="abs" style="left:918px;top:1735px" width="28" height="24" viewBox="0 0 28 24"><path d="M2 12 Q14 -1 26 12 Q14 25 2 12Z" fill="#2e2e2e"/><circle cx="14" cy="12" r="5" fill="#fff"/><circle cx="14" cy="12" r="3" fill="#2e2e2e"/><path d="M4 2 L25 23" stroke="#fff" stroke-width="4"/><path d="M4 2 L25 23" stroke="#2e2e2e" stroke-width="2.4" stroke-linecap="round"/></svg>
<div class="abs" style="left:589.0px;top:1787.6px;font-size:19.3px;line-height:23.16px;color:#333;font-weight:400;white-space:nowrap;">item-1</div>
<svg class="abs" style="left:662px;top:1791px" width="16" height="13" viewBox="0 0 16 13"><path d="M2 3.5 L8 9.5 L14 3.5" stroke="#2e2e2e" stroke-width="2.7" fill="none" stroke-linecap="round" stroke-linejoin="round"/></svg>
<div class="abs" style="left:614.5px;top:1838.8px;font-size:19.3px;line-height:23.16px;color:#333;font-weight:400;white-space:nowrap;">icon</div>
<svg class="abs" style="left:669px;top:1842px" width="16" height="13" viewBox="0 0 16 13"><path d="M2 3.5 L8 9.5 L14 3.5" stroke="#2e2e2e" stroke-width="2.7" fill="none" stroke-linecap="round" stroke-linejoin="round"/></svg>
<div class="abs" style="left:640.0px;top:1890.0px;font-size:19.3px;line-height:23.16px;color:#333;font-weight:400;white-space:nowrap;">count</div>
<div class="abs" style="left:589.0px;top:1941.2px;font-size:19.3px;line-height:23.16px;color:#333;font-weight:400;white-space:nowrap;">item-2</div>
<svg class="abs" style="left:662px;top:1945px" width="16" height="13" viewBox="0 0 16 13"><path d="M2 3.5 L8 9.5 L14 3.5" stroke="#2e2e2e" stroke-width="2.7" fill="none" stroke-linecap="round" stroke-linejoin="round"/></svg>
<div class="abs" style="left:473.5px;top:185.2px;width:2px;height:972.8px;background:#d2d2d2"></div>
<div class="abs" style="left:499.0px;top:236.4px;width:2px;height:460.8px;background:#d2d2d2"></div>
<div class="abs" style="left:524.5px;top:287.6px;width:2px;height:153.6px;background:#d2d2d2"></div>
<div class="abs" style="left:550.0px;top:390.0px;width:2px;height:51.2px;background:#d2d2d2"></div>
<div class="abs" style="left:524.5px;top:492.4px;width:2px;height:153.6px;background:#d2d2d2"></div>
<div class="abs" style="left:550.0px;top:543.6px;width:2px;height:51.2px;background:#d2d2d2"></div>
<div class="abs" style="left:499.0px;top:748.4px;width:2px;height:409.6px;background:#d2d2d2"></div>
<div class="abs" style="left:524.5px;top:799.6px;width:2px;height:358.4px;background:#d2d2d2"></div>
<div class="abs" style="left:550.0px;top:850.8px;width:2px;height:102.4px;background:#d2d2d2"></div>
<div class="abs" style="left:575.5px;top:902.0px;width:2px;height:51.2px;background:#d2d2d2"></div>
<div class="abs" style="left:550.0px;top:1055.6px;width:2px;height:102.4px;background:#d2d2d2"></div>
<div class="abs" style="left:473.5px;top:1209.2px;width:2px;height:768.0px;background:#d2d2d2"></div>
<div class="abs" style="left:499.0px;top:1260.4px;width:2px;height:716.8px;background:#d2d2d2"></div>
<div class="abs" style="left:524.5px;top:1311.6px;width:2px;height:665.6px;background:#d2d2d2"></div>
<div class="abs" style="left:550.0px;top:1362.8px;width:2px;height:102.4px;background:#d2d2d2"></div>
<div class="abs" style="left:550.0px;top:1516.4px;width:2px;height:460.8px;background:#d2d2d2"></div>
<div class="abs" style="left:575.5px;top:1567.6px;width:2px;height:153.6px;background:#d2d2d2"></div>
<div class="abs" style="left:601.0px;top:1618.8px;width:2px;height:102.4px;background:#d2d2d2"></div>
<div class="abs" style="left:626.5px;top:1670.0px;width:2px;height:51.2px;background:#d2d2d2"></div>
<div class="abs" style="left:575.5px;top:1772.4px;width:2px;height:204.8px;background:#d2d2d2"></div>
<div class="abs" style="left:601.0px;top:1823.6px;width:2px;height:102.4px;background:#d2d2d2"></div>
<div class="abs" style="left:626.5px;top:1874.8px;width:2px;height:51.2px;background:#d2d2d2"></div>
<div class="abs" style="left:448px;top:134px;width:2px;height:1824px;background:#d2d2d2"></div>
<div class="abs" style="left:2314px;top:181px;width:135px;height:2px;background:#e6e6e6"></div>
<div class="abs" style="left:2315px;top:143.1px;font-size:20px;line-height:24.00px;color:#9a9a9a;font-weight:400;white-space:nowrap;">l5</div>
<div class="abs" style="left:2290px;top:295px;width:94px;height:51px;border:2px solid #e6e6e6;border-right:none"></div><div class="abs" style="left:2383px;top:295px;width:40px;height:51px;background:#f4f4f4;border-radius:0 9px 9px 0"></div><svg class="abs" style="left:2393px;top:301px" width="20" height="40" viewBox="0 0 20 40"><path d="M2 11 L10 3 L18 11 M2 29 L10 37 L18 29" stroke="#2a2a2a" stroke-width="3.2" fill="none" stroke-linecap="round" stroke-linejoin="round"/></svg>
<div class="abs" style="left:2250px;top:395px;width:173px;height:51px;border:3px solid #dedede;border-radius:10px"></div>
<div class="abs" style="left:2063px;width:600px;text-align:center;top:407.2px;font-size:22px;line-height:26.40px;color:#888;font-weight:400;white-space:nowrap;">fixed</div>
<div class="abs" style="left:2290px;top:494px;width:94px;height:51px;border:2px solid #e6e6e6;border-right:none"></div><div class="abs" style="left:2383px;top:494px;width:40px;height:51px;background:#f4f4f4;border-radius:0 9px 9px 0"></div><svg class="abs" style="left:2393px;top:500px" width="20" height="40" viewBox="0 0 20 40"><path d="M2 11 L10 3 L18 11 M2 29 L10 37 L18 29" stroke="#2a2a2a" stroke-width="3.2" fill="none" stroke-linecap="round" stroke-linejoin="round"/></svg><div class="abs" style="left:2361px;top:508.1px;font-size:20px;line-height:24.00px;color:#555;font-weight:400;white-space:nowrap;">-</div>
<div class="abs" style="left:2290px;top:593px;width:94px;height:51px;border:2px solid #e6e6e6;border-right:none"></div><div class="abs" style="left:2383px;top:593px;width:40px;height:51px;background:#f4f4f4;border-radius:0 9px 9px 0"></div><svg class="abs" style="left:2393px;top:599px" width="20" height="40" viewBox="0 0 20 40"><path d="M2 11 L10 3 L18 11 M2 29 L10 37 L18 29" stroke="#2a2a2a" stroke-width="3.2" fill="none" stroke-linecap="round" stroke-linejoin="round"/></svg><div class="abs" style="left:2361px;top:607.1px;font-size:20px;line-height:24.00px;color:#555;font-weight:400;white-space:nowrap;">-</div>
<div class="abs" style="left:2314px;top:676px;width:135px;height:2px;background:#eaeaea"></div>
<div class="abs" style="left:2314px;top:741px;width:135px;height:2px;background:#eaeaea"></div>
<div class="abs" style="left:2314px;top:806px;width:135px;height:2px;background:#eaeaea"></div>
<div class="abs" style="left:2314px;top:871px;width:135px;height:2px;background:#eaeaea"></div>
<div class="abs" style="left:2314px;top:936px;width:135px;height:2px;background:#eaeaea"></div>
<div class="abs" style="left:2314px;top:1001px;width:135px;height:2px;background:#eaeaea"></div>
<div class="abs" style="left:2436px;top:0;width:13px;height:1958px;background:linear-gradient(90deg,rgba(0,0,0,0),rgba(0,0,0,.08))"></div>
<style>.gt{-webkit-text-stroke:2px #fff;text-shadow:3px 3px 2px rgba(0,0,0,.9)}</style>
<div class="abs" style="left:2449px;top:0;width:819px;height:77px;background:#fff"></div>
<svg class="abs" style="left:2468px;top:21px" width="26" height="22" viewBox="0 0 26 22"><path d="M12 3 L4 11 L12 19 M22 3 L14 11 L22 19" stroke="#2a2a2a" stroke-width="3.2" fill="none" stroke-linecap="round" stroke-linejoin="round"/></svg>
<div class="abs" style="left:2449px;top:77px;width:819px;height:111px;background:#06060a"></div>
<div class="abs" style="left:2449px;top:188px;width:819px;height:1770px;background:#0c0e14;border-bottom-right-radius:14px"></div>
<div class="abs" style="left:2481px;top:102px;width:169px;height:61px;background:#22364e;border-radius:12px"></div>
<svg class="abs" style="left:2507px;top:121px" width="24" height="24" viewBox="0 0 24 24"><circle cx="12" cy="12" r="9" fill="#222" stroke="#222" stroke-width="4" stroke-dasharray="2.4 2.3"/><circle cx="12" cy="12" r="7.5" fill="#333"/><circle cx="12" cy="12" r="3.5" fill="#888"/><circle cx="12" cy="12" r="2" fill="#333"/></svg>
<div class="abs" style="left:2536px;top:119.9px;font-size:22.3px;line-height:26.76px;color:#8a8a8a;font-weight:700;white-space:nowrap;">Console</div>
<div class="abs" style="left:2681px;top:123.0px;font-size:19px;line-height:22.80px;color:#8a8a8a;font-weight:400;white-space:nowrap;">User ID: e65e50c2-94a3-11f0-8030-1fec53a055ba</div>
<div class="abs" style="left:3124px;top:104px;width:112px;height:58px;background:#5a1e20;border-radius:12px"></div>
<div class="abs" style="left:2680px;width:1000px;text-align:center;top:120.9px;font-size:22.3px;line-height:26.76px;color:#8a6a6a;font-weight:700;white-space:nowrap;">Reset</div>
<div class="abs" style="left:2478px;top:213px;width:118px;height:258px;background:#151922;border-radius:14px"></div>
<div class="abs" style="left:3122px;top:213px;width:117px;height:258px;background:#151922;border-radius:14px"></div>
<div class="abs" style="left:2613px;top:300px;width:226px;height:183px;background:#10141c;border-radius:14px"></div>
<div class="abs" style="left:2904px;top:300px;width:200px;height:183px;background:#10141c;border-radius:14px"></div>
<div class="abs" style="left:2225px;width:1000px;text-align:center;top:397.8px;font-size:34px;line-height:40.80px;color:#1e3e60;font-weight:700;white-space:nowrap;">0</div>
<div class="abs" style="left:2495px;width:1000px;text-align:center;top:392.1px;font-size:40px;line-height:48.00px;color:#1e3e60;font-weight:700;white-space:nowrap;">0</div>
<div class="abs" style="left:2037px;width:1000px;text-align:center;top:439.4px;font-size:19px;line-height:22.80px;color:#959595;font-weight:700;white-space:nowrap;">14:11:05</div>
<div class="abs" style="left:2680px;width:1000px;text-align:center;top:439.4px;font-size:19px;line-height:22.80px;color:#959595;font-weight:700;white-space:nowrap;">11:47:43</div>
<div class="abs" style="left:2225px;width:1000px;text-align:center;top:360.4px;font-size:26px;line-height:31.20px;color:#666;font-weight:400;white-space:nowrap;">Current level:</div>
<div class="abs" style="left:2504px;width:1000px;text-align:center;top:360.4px;font-size:26px;line-height:31.20px;color:#666;font-weight:400;white-space:nowrap;">Win Streak:</div>
<div class="abs" style="left:2478px;top:496px;width:118px;height:80px;background:#151922;border-radius:14px"></div>
<div class="abs" style="left:3122px;top:496px;width:117px;height:80px;background:#151922;border-radius:14px"></div>
<div class="abs" style="left:2651px;top:524px;width:191px;height:60px;background:#1f3f1e;border-radius:12px"></div>
<div class="abs" style="left:2876px;top:524px;width:191px;height:60px;background:#402020;border-radius:12px"></div>
<div class="abs" style="left:2740px;top:541.6px;font-size:30px;line-height:36.00px;color:#777;font-weight:700;white-space:nowrap;">Win</div>
<svg class="abs" style="left:2706px;top:542px" width="28" height="30" viewBox="0 0 28 30"><path d="M6 2 H22 V10 Q22 18 14 19 Q6 18 6 10Z" fill="#d8a030"/><path d="M6 5 Q0 5 2 10 Q4 13 7 13 M22 5 Q28 5 26 10 Q24 13 21 13" stroke="#c89028" stroke-width="2" fill="none"/><rect x="12" y="18" width="4" height="6" fill="#c89028"/><rect x="8" y="24" width="12" height="4" fill="#b88020"/></svg>
<div class="abs" style="left:2958px;top:541.6px;font-size:30px;line-height:36.00px;color:#777;font-weight:700;white-space:nowrap;">Lose</div>
<svg class="abs" style="left:2922px;top:542px" width="30" height="30" viewBox="0 0 30 30"><path d="M4 4 L26 26 M26 4 L4 26" stroke="#c02020" stroke-width="6" stroke-linecap="round"/></svg>
<svg class="abs" style="left:2500px;top:220px" width="80" height="40" viewBox="0 0 80 40"><rect x="20" y="14" width="37" height="30" rx="8" fill="#2a6a78"/><path d="M28 18 L28 6 L34 12 L39 3 L44 12 L50 6 L50 18Z" fill="#d8a040"/></svg>
<svg class="abs" style="left:2514px;top:366px" width="46" height="72" viewBox="0 0 46 72"><rect x="2" y="2" width="42" height="68" rx="10" fill="#4a4a4a"/><rect x="2" y="2" width="42" height="14" rx="7" fill="#5a5a5a"/></svg>
<svg class="abs" style="left:3138px;top:225px" width="90" height="60" viewBox="0 0 90 60"><path d="M10 58 L20 10 Q45 0 80 20 L86 58Z" fill="#d8b048"/></svg>
<svg class="abs" style="left:3140px;top:376px" width="84" height="58" viewBox="0 0 84 58"><rect x="8" y="4" width="74" height="50" rx="6" fill="#d8a838"/><rect x="20" y="20" width="50" height="20" fill="#3a5ab0"/><circle cx="18" cy="40" r="8" fill="#8040c0"/></svg>
<svg class="abs" style="left:2500px;top:512px" width="76" height="56" viewBox="0 0 76 56"><path d="M6 50 Q8 30 30 22 L50 12 L64 20 L68 40 L40 52Z" fill="#d84040"/><path d="M38 6 L70 10 L66 18 L40 14Z" fill="#3060c0"/><circle cx="22" cy="44" r="9" fill="#222"/><circle cx="56" cy="40" r="9" fill="#222"/><path d="M30 34 L44 28" stroke="#e0c040" stroke-width="6"/></svg>
<svg class="abs" style="left:3136px;top:530px" width="90" height="46" viewBox="0 0 90 46"><rect x="8" y="4" width="74" height="42" rx="6" fill="#d8a838"/><path d="M30 4 L45 -10 L60 4Z" fill="#4aa0d0"/></svg>
<div class="abs" style="left:2609px;top:937px;width:499px;height:1021px;background:#0e1118;border:2px solid #131a26;border-top:none"></div>
<div class="abs" style="left:2636px;top:950px;width:144px;height:20px;background:#151b24;border-radius:12px"></div>
<div class="abs" style="left:2790px;top:950px;width:144px;height:20px;background:#151b24;border-radius:12px"></div>
<div class="abs" style="left:2944px;top:950px;width:144px;height:20px;background:#151b24;border-radius:12px"></div>
<div class="abs" style="left:2636px;top:1345px;width:144px;height:20px;background:#151b24;border-radius:12px"></div>
<div class="abs" style="left:2790px;top:1345px;width:144px;height:20px;background:#151b24;border-radius:12px"></div>
<div class="abs" style="left:2944px;top:1345px;width:144px;height:20px;background:#151b24;border-radius:12px"></div>
<div class="abs" style="left:2636px;top:1750px;width:144px;height:178px;background:#161c26;border-radius:16px"></div>
<div class="abs" style="left:2636px;top:1945px;width:144px;height:40px;background:#161c26;border-radius:16px"></div>
<svg class="abs" style="left:2658px;top:1822px" width="100" height="34" viewBox="0 0 100 34"><path d="M4 30 L12 4 L22 4 L22 30Z" fill="#3a8a2a"/><path d="M96 30 L88 4 L78 4 L78 30Z" fill="#3a8a2a"/><rect x="10" y="6" width="80" height="26" fill="#4ea838"/></svg>
<svg class="abs" style="left:2670px;top:1778px" width="80" height="50" viewBox="0 0 80 50"><path d="M18 48 L44 14" stroke="#c87a30" stroke-width="11" stroke-linecap="round"/><path d="M20 14 Q24 0 44 4 L62 14 L72 20 Q76 28 66 32 L50 26 L36 20 Q26 24 20 14Z" fill="#f0b840"/></svg>
<div class="abs" style="left:2651.6px;top:1874px;width:38px;height:38px;border-radius:50%;background:#1b3a5c;color:#666;font-weight:700;font-size:22px;line-height:38px;text-align:center">-</div>
<div class="abs" style="left:2734.4px;top:1874px;width:38px;height:38px;border-radius:50%;background:#1b3a5c;color:#666;font-weight:700;font-size:22px;line-height:38px;text-align:center">+</div>
<div class="abs" style="left:2211.6px;width:1000px;text-align:center;top:1879.3px;font-size:24px;line-height:28.80px;color:#888;font-weight:700;white-space:nowrap;">0</div>
<div class="abs" style="left:2790px;top:1750px;width:144px;height:178px;background:#161c26;border-radius:16px"></div>
<div class="abs" style="left:2790px;top:1945px;width:144px;height:40px;background:#161c26;border-radius:16px"></div>
<svg class="abs" style="left:2812px;top:1822px" width="100" height="34" viewBox="0 0 100 34"><path d="M4 30 L12 4 L22 4 L22 30Z" fill="#3a8a2a"/><path d="M96 30 L88 4 L78 4 L78 30Z" fill="#3a8a2a"/><rect x="10" y="6" width="80" height="26" fill="#4ea838"/></svg>
<svg class="abs" style="left:2818px;top:1780px" width="90" height="48" viewBox="0 0 90 48"><path d="M8 48 Q6 20 24 14 Q40 14 42 48Z" fill="#d83030"/><path d="M30 48 Q30 6 48 4 Q62 4 64 20 Q52 20 52 48Z" fill="#e8b040"/><path d="M48 48 Q46 22 66 18 Q84 20 84 48Z" fill="#2a60c8"/></svg>
<div class="abs" style="left:2805.6px;top:1874px;width:38px;height:38px;border-radius:50%;background:#1b3a5c;color:#666;font-weight:700;font-size:22px;line-height:38px;text-align:center">-</div>
<div class="abs" style="left:2888.4px;top:1874px;width:38px;height:38px;border-radius:50%;background:#1b3a5c;color:#666;font-weight:700;font-size:22px;line-height:38px;text-align:center">+</div>
<div class="abs" style="left:2365.6px;width:1000px;text-align:center;top:1879.3px;font-size:24px;line-height:28.80px;color:#888;font-weight:700;white-space:nowrap;">0</div>
<div class="abs" style="left:2944px;top:1750px;width:144px;height:178px;background:#161c26;border-radius:16px"></div>
<div class="abs" style="left:2944px;top:1945px;width:144px;height:40px;background:#161c26;border-radius:16px"></div>
<svg class="abs" style="left:2966px;top:1822px" width="100" height="34" viewBox="0 0 100 34"><path d="M4 30 L12 4 L22 4 L22 30Z" fill="#3a8a2a"/><path d="M96 30 L88 4 L78 4 L78 30Z" fill="#3a8a2a"/><rect x="10" y="6" width="80" height="26" fill="#4ea838"/></svg>
<svg class="abs" style="left:2978px;top:1777px" width="76" height="56" viewBox="0 0 76 56"><circle cx="38" cy="28" r="27" fill="#d8a030" stroke="#111" stroke-width="2"/><path d="M11 28 A27 27 0 0 1 38 1 L38 28Z" fill="#d84020"/><path d="M38 1 A27 27 0 0 1 65 28 L38 28Z" fill="#3a8a3a"/><path d="M38 28 L65 28 A27 27 0 0 1 38 55Z" fill="#3070d0"/><path d="M38 28 L38 55 A27 27 0 0 1 20 48Z" fill="#8030c0"/></svg>
<div class="abs" style="left:2959.6px;top:1874px;width:38px;height:38px;border-radius:50%;background:#1b3a5c;color:#666;font-weight:700;font-size:22px;line-height:38px;text-align:center">-</div>
<div class="abs" style="left:3042.4px;top:1874px;width:38px;height:38px;border-radius:50%;background:#1b3a5c;color:#666;font-weight:700;font-size:22px;line-height:38px;text-align:center">+</div>
<div class="abs" style="left:2519.6px;width:1000px;text-align:center;top:1879.3px;font-size:24px;line-height:28.80px;color:#888;font-weight:700;white-space:nowrap;">0</div>
<svg class="abs" style="left:3174px;top:1862px" width="24" height="34" viewBox="0 0 24 34"><path d="M18 4 L6 17 L18 30" stroke="#999" stroke-width="5" fill="none" stroke-linecap="round" stroke-linejoin="round"/></svg>
<svg class="abs" style="left:2449px;top:255px" width="819" height="140" viewBox="0 0 819 140"><path d="M3 27 L56 27 L62 114 L97 130 L33 130Z" fill="#3272d8" stroke="#000" stroke-width="2"/><path d="M47 27 L56 27 L62 114 L97 130 L55 130Z" fill="#2456b0"/><path d="M814 28 L763 28 L786 130 L795 130Z" fill="#2f6ad0" stroke="#000" stroke-width="2"/><defs><linearGradient id="rg" x1="0" y1="0" x2="0" y2="1"><stop offset="0" stop-color="#2a5cbc"/><stop offset="1" stop-color="#3a7ed8"/></linearGradient></defs><path d="M55 8 Q55 2 61 2 L759 2 Q765 2 765 8 L765 108 Q765 114 759 114 L68 114 Q62 114 62 108Z" fill="url(#rg)" stroke="#000" stroke-width="2.5"/><rect x="58" y="4" width="704" height="5" rx="3" fill="#4a8ae8"/></svg>
<div class="abs gt" style="left:2358px;width:1000px;text-align:center;top:270.1px;font-size:77px;line-height:92.40px;color:#fff;font-weight:700;white-space:nowrap;transform:scaleX(0.872);transform-origin:center top;letter-spacing:-1px;-webkit-text-stroke:3px #fff;">Chain Deal</div>
<svg class="abs" style="left:3124px;top:262px" width="118" height="134" viewBox="0 0 118 134"><path d="M59 3 L114 34 L114 102 L59 131 L4 102 L4 34Z" fill="#541420" stroke="#000" stroke-width="3" stroke-linejoin="round"/><path d="M59 4 L113 34 L113 94 L59 124 L5 94 L5 34Z" fill="#b44038"/><path d="M59 4 L113 34 L113 74 L59 56 L5 74 L5 34Z" fill="#e85850"/><g transform="translate(59 68) scale(0.78) translate(-59 -68)"><path d="M38 36 L59 56 L80 36 L92 48 L72 68 L92 88 L80 100 L59 80 L38 100 L26 88 L46 68 L26 48Z" fill="#000" stroke="#000" stroke-width="17" stroke-linejoin="round" transform="translate(1 6)"/><path d="M38 36 L59 56 L80 36 L92 48 L72 68 L92 88 L80 100 L59 80 L38 100 L26 88 L46 68 L26 48Z" fill="#fff" stroke="#000" stroke-width="17" stroke-linejoin="round"/><path d="M38 36 L59 56 L80 36 L92 48 L72 68 L92 88 L80 100 L59 80 L38 100 L26 88 L46 68 L26 48Z" fill="#fff" stroke="#fff" stroke-width="11" stroke-linejoin="round"/></g></svg>
<div class="abs" style="left:2776px;top:380px;width:207px;height:66px;border-radius:13px;background:#94343a;border:1.5px solid #000"></div>
<div class="abs" style="left:2777px;top:381px;width:205px;height:58px;border-radius:12px;background:#d04444"></div>
<div class="abs" style="left:2777px;top:381px;width:205px;height:31px;border-radius:12px 12px 12px 0;background:#f05454"></div>
<svg class="abs" style="left:2718px;top:372px" width="80" height="80" viewBox="0 0 80 80"><rect x="22" y="4" width="12" height="14" rx="3" fill="#f0a030" stroke="#000" stroke-width="1.5" transform="rotate(-15 28 11)"/><rect x="44" y="4" width="12" height="14" rx="3" fill="#f0a030" stroke="#000" stroke-width="1.5" transform="rotate(20 50 11)"/><rect x="62" y="16" width="10" height="12" rx="3" fill="#f0a030" stroke="#000" stroke-width="1.5" transform="rotate(40 67 22)"/><circle cx="38" cy="42" r="31" fill="#f8c840" stroke="#000" stroke-width="2"/><circle cx="38" cy="42" r="24" fill="#dcdcdc"/><circle cx="38" cy="43" r="17" fill="#f0a040"/><path d="M26 40 L52 44 L28 48Z" fill="#e83030"/></svg>
<div class="abs gt" style="left:2386px;width:1000px;text-align:center;top:383.7px;font-size:43.6px;line-height:52.32px;color:#fff;font-weight:700;white-space:nowrap;transform:scaleX(0.76);transform-origin:center top;">2d 14h</div>
<div class="abs gt" style="left:2358.5px;width:1000px;text-align:center;top:465.6px;font-size:49px;line-height:58.80px;color:#fff;font-weight:700;white-space:nowrap;transform:scaleX(0.87);transform-origin:center top;letter-spacing:-0.5px;">Claim each offer to unlock free rewards!</div>
<div class="abs" style="left:2464px;top:568px;width:789px;height:369px;border-radius:16px;background:#f4a040;border:1.5px solid #000"></div>
<div class="abs" style="left:2471px;top:574px;width:775px;height:350px;border-radius:11px;background:radial-gradient(ellipse at 35% 60%,#b8582c,#7c3420 80%)"></div>
<div class="abs" style="left:2471px;top:574px;width:775px;height:218px;border-radius:11px 11px 0 0;background:#86341c"></div>
<div class="abs" style="left:2478px;top:579px;width:761px;height:213px;background:radial-gradient(ellipse at 50% 40%,#d4a85c,#dcae64)"></div>
<div class="abs" style="left:2718px;top:825px;width:281px;height:80px;border-radius:14px;background:rgba(40,10,0,.5)"></div>
<div class="abs" style="left:2718px;top:817px;width:281px;height:80px;border-radius:14px;background:#3c764c;border:2px solid #0a140a"></div>
<div class="abs" style="left:2720px;top:819px;width:277px;height:66px;border-radius:12px;background:#5eb440"></div>
<div class="abs" style="left:2720px;top:819px;width:277px;height:36px;border-radius:12px 12px 0 0;background:#7ad644"></div>
<div class="abs" style="left:2724px;top:853px;width:264px;height:10px;border-radius:10px 10px 0 0;background:#5eb440"></div>
<div class="abs gt" style="left:2358.5px;width:1000px;text-align:center;top:817.1px;font-size:58px;line-height:69.60px;color:#fff;font-weight:700;white-space:nowrap;transform:scaleX(0.72);transform-origin:center top;letter-spacing:1px;">FREE</div>
<div class="abs" style="left:2464px;top:972px;width:789px;height:369px;border-radius:16px;background:#f4a040;border:1.5px solid #000"></div>
<div class="abs" style="left:2471px;top:978px;width:775px;height:350px;border-radius:11px;background:radial-gradient(ellipse at 35% 60%,#b8582c,#7c3420 80%)"></div>
<div class="abs" style="left:2471px;top:978px;width:775px;height:218px;border-radius:11px 11px 0 0;background:#86341c"></div>
<div class="abs" style="left:2478px;top:983px;width:761px;height:213px;background:radial-gradient(ellipse at 50% 40%,#d4a85c,#dcae64)"></div>
<div class="abs" style="left:2718px;top:1229px;width:281px;height:80px;border-radius:14px;background:rgba(40,10,0,.5)"></div>
<div class="abs" style="left:2718px;top:1221px;width:281px;height:80px;border-radius:14px;background:#3c764c;border:2px solid #0a140a"></div>
<div class="abs" style="left:2720px;top:1223px;width:277px;height:66px;border-radius:12px;background:#5eb440"></div>
<div class="abs" style="left:2720px;top:1223px;width:277px;height:36px;border-radius:12px 12px 0 0;background:#7ad644"></div>
<div class="abs" style="left:2724px;top:1257px;width:264px;height:10px;border-radius:10px 10px 0 0;background:#5eb440"></div>
<div class="abs gt" style="left:2358.5px;width:1000px;text-align:center;top:1221.1px;font-size:58px;line-height:69.60px;color:#fff;font-weight:700;white-space:nowrap;transform:scaleX(0.72);transform-origin:center top;letter-spacing:1px;">FREE</div>
<svg class="abs" style="left:2934px;top:1217px" width="60" height="80" viewBox="0 0 60 80"><g fill="#000" stroke="#000" stroke-width="4"><circle cx="30" cy="18" r="17"/><circle cx="30" cy="50" r="23"/></g><circle cx="30" cy="52" r="22" fill="#e08a28"/><circle cx="30" cy="48" r="22" fill="#ffe050"/><circle cx="30" cy="18" r="16.5" fill="#ffe050"/><path d="M19 22 Q30 2 41 22 Q30 14 19 22Z" fill="#e08a28"/><path d="M22 21 Q30 15 38 21" stroke="#000" stroke-width="2" fill="none"/><ellipse cx="18" cy="36" rx="6" ry="4.8" transform="rotate(-25 18 36)" fill="#fff"/><circle cx="30" cy="46" r="7.5" fill="#e08a28"/><path d="M26 49 L34 49 L36 60 L24 60Z" fill="#e08a28"/></svg>
<div class="abs" style="left:2464px;top:1374px;width:789px;height:369px;border-radius:16px;background:#f4a040;border:1.5px solid #000"></div>
<div class="abs" style="left:2471px;top:1380px;width:775px;height:350px;border-radius:11px;background:radial-gradient(ellipse at 35% 60%,#b8582c,#7c3420 80%)"></div>
<div class="abs" style="left:2471px;top:1380px;width:775px;height:218px;border-radius:11px 11px 0 0;background:#86341c"></div>
<div class="abs" style="left:2478px;top:1385px;width:761px;height:213px;background:radial-gradient(ellipse at 50% 40%,#d4a85c,#dcae64)"></div>
<div class="abs" style="left:2718px;top:1631px;width:281px;height:80px;border-radius:14px;background:rgba(40,10,0,.5)"></div>
<div class="abs" style="left:2718px;top:1623px;width:281px;height:80px;border-radius:14px;background:#3c764c;border:2px solid #0a140a"></div>
<div class="abs" style="left:2720px;top:1625px;width:277px;height:66px;border-radius:12px;background:#5eb440"></div>
<div class="abs" style="left:2720px;top:1625px;width:277px;height:36px;border-radius:12px 12px 0 0;background:#7ad644"></div>
<div class="abs" style="left:2724px;top:1659px;width:264px;height:10px;border-radius:10px 10px 0 0;background:#5eb440"></div>
<div class="abs gt" style="left:2358.5px;width:1000px;text-align:center;top:1623.1px;font-size:58px;line-height:69.60px;color:#fff;font-weight:700;white-space:nowrap;transform:scaleX(0.72);transform-origin:center top;letter-spacing:1px;">FREE</div>
<svg class="abs" style="left:2934px;top:1619px" width="60" height="80" viewBox="0 0 60 80"><g fill="#000" stroke="#000" stroke-width="4"><circle cx="30" cy="18" r="17"/><circle cx="30" cy="50" r="23"/></g><circle cx="30" cy="52" r="22" fill="#e08a28"/><circle cx="30" cy="48" r="22" fill="#ffe050"/><circle cx="30" cy="18" r="16.5" fill="#ffe050"/><path d="M19 22 Q30 2 41 22 Q30 14 19 22Z" fill="#e08a28"/><path d="M22 21 Q30 15 38 21" stroke="#000" stroke-width="2" fill="none"/><ellipse cx="18" cy="36" rx="6" ry="4.8" transform="rotate(-25 18 36)" fill="#fff"/><circle cx="30" cy="46" r="7.5" fill="#e08a28"/><path d="M26 49 L34 49 L36 60 L24 60Z" fill="#e08a28"/></svg>
<svg class="abs" style="left:2780px;top:605px" width="175" height="165" viewBox="0 0 175 165"><g stroke="#000" stroke-width="6" stroke-linejoin="round"><path d="M43 153 Q20 166 8 148 Q2 136 9 131 L67 56 L89 70Z" fill="#b45a28"/><path d="M32 24 Q56 0 116 34 L124 50 L134 46 Q160 52 156 84 Q150 110 126 108 L116 100 L104 90 L88 86 L78 74 Q76 54 60 46 Q44 42 32 24Z" fill="#f0c850"/></g><path d="M43 150 Q22 162 11 146 Q6 136 11 132 L19 122 Q32 134 48 140Z" fill="#3a8ee0"/><ellipse cx="137" cy="78" rx="16" ry="25" transform="rotate(-38 137 78)" fill="#e8a030"/><path d="M60 16 Q90 18 108 32 Q90 28 62 22Z" fill="#fff" opacity=".35"/><path d="M104 88 L126 56 L134 64 L114 96Z" fill="#e09a30"/></svg>
<div class="abs gt" style="left:2424px;width:1000px;text-align:center;top:723.4px;font-size:44px;line-height:52.80px;color:#fff;font-weight:700;white-space:nowrap;transform:scaleX(0.88);transform-origin:center top;">x1</div>
<svg class="abs" style="left:2760px;top:1010px" width="200" height="170" viewBox="0 0 200 170"><circle cx="87" cy="56" r="46" fill="#f4c848" stroke="#000" stroke-width="3.5"/><circle cx="87" cy="56" r="31" fill="#e8a838"/><circle cx="87" cy="58" r="24" fill="#f0c040"/><path d="M62 52 A26 26 0 0 1 80 30" stroke="#fff" stroke-width="6" fill="none"/><path d="M110 92 L110 112 A37 17 0 0 0 184 112 L184 92 Z" fill="#d88a30" stroke="#000" stroke-width="3.5"/><ellipse cx="147" cy="92" rx="37" ry="17" fill="#f4c848" stroke="#000" stroke-width="1.5"/><ellipse cx="147" cy="92" rx="25.2" ry="10.5" fill="#e8b038"/><path d="M124.1 89.5 A25.9 11.9 0 0 1 154.4 79.8" stroke="#fff" stroke-width="3.4" fill="none"/><path d="M14.5 92 L14.5 115 A47.5 28.6 0 0 0 109.5 115 L109.5 92 Z" fill="#d88a30" stroke="#000" stroke-width="3.5"/><ellipse cx="62" cy="92" rx="47.5" ry="28.6" fill="#f4c848" stroke="#000" stroke-width="1.5"/><ellipse cx="62" cy="92" rx="32.3" ry="17.7" fill="#e8b038"/><path d="M32.5 87.7 A33.2 20.0 0 0 1 71.5 71.4" stroke="#fff" stroke-width="5.7" fill="none"/></svg>
<div class="abs gt" style="left:2359px;width:1000px;text-align:center;top:1123.5px;font-size:46px;line-height:55.20px;color:#fff;font-weight:700;white-space:nowrap;transform:scaleX(0.95);transform-origin:center top;">100</div>
<svg class="abs" style="left:2778px;top:1416px" width="162" height="150" viewBox="0 0 162 150"><path d="M10 72 L10 40 Q12 8 28 6 L52 6 L56 12 L104 12 L108 6 L132 6 Q150 8 152 40 L152 72Z" fill="#888" stroke="#000" stroke-width="4" stroke-linejoin="round"/><path d="M38 14 L124 14 Q138 30 136 72 L26 72 Q24 30 38 14Z" fill="#a05028"/><path d="M40 16 L122 16 Q128 24 130 36 L32 36 Q34 24 40 16Z" fill="#8c684c"/><path d="M14 40 Q16 16 28 12 L40 12 Q30 24 30 40Z" fill="#bcbcbc"/><path d="M148 40 Q146 16 134 12 L122 12 Q132 24 132 40Z" fill="#bcbcbc"/><path d="M10 102 L152 102 L140 143 L22 143Z" fill="#a05028" stroke="#000" stroke-width="4" stroke-linejoin="round"/><path d="M12 104 L38 104 L44 141 L23 141Z" fill="#999"/><path d="M124 104 L150 104 L139 141 L118 141Z" fill="#999"/><rect x="5" y="71" width="152" height="32" rx="3" fill="#888" stroke="#000" stroke-width="4"/><path d="M51 83 L79 66 L109 87 L90 122 L69 122Z" fill="#8a8a8a"/><path d="M52 82 L78 66 L80 71 L55 87Z" fill="#d0d0d0"/><circle cx="80" cy="94" r="8" fill="#5a1010"/><rect x="76" y="96" width="8" height="12" fill="#6a1818"/></svg>
<div class="abs gt" style="left:2424px;width:1000px;text-align:center;top:1528.4px;font-size:44px;line-height:52.80px;color:#fff;font-weight:700;white-space:nowrap;transform:scaleX(0.88);transform-origin:center top;">x1</div>
<div id="overlay"></div>
<div class="abs" style="left:0;top:1946px;width:12px;height:12px;background:radial-gradient(circle at 100% 0,transparent 11px,#000 12.5px)"></div>
<div class="abs" style="left:3256px;top:1946px;width:12px;height:12px;background:radial-gradient(circle at 0 0,transparent 11px,#000 12.5px)"></div>
<div id="modal">
  <div id="mhead">
    <div id="mtitle">Global Script Editor</div>
    <div id="mhelp">?</div>
    <svg id="mclose" viewBox="0 0 16 16"><path d="M2 2L14 14M14 2L2 14" stroke="#8a8a8a" stroke-width="2.6"/></svg>
  </div>
  <div id="code">
    <div id="lines">
<div class="cl"><span class="ln">525</span><span class="cx"></span></div>
<div class="cl"><span class="ln">526</span><span class="cx"><span class="tc">// Main animation sequence when an offer is purchased</span></span></div>
<div class="cl"><span class="ln">527</span><span class="cx"><span class="tk">function</span> <span class="td">executeChainDealPurchaseAnimation</span>(<span class="td">containerElement</span>, <span class="td">offerIndex</span>, <span class="td">onEnd</span>) {</span></div>
<div class="cl"><span class="ln">528</span><span class="cx">    <span class="tf">console</span>.<span class="tf">log</span>(`<span class="em"><svg width="23" height="22" viewBox="0 0 23 22"><rect x="3" y="11" width="18" height="11" rx="1" fill="#2a2a2a"/><path d="M5 15 H20 M5 19 H20" stroke="#777" stroke-width="0.9"/><path d="M3 11 L22 11 L22 7 L3 7Z" fill="#222"/><path d="M6 11 L9 7 M11 11 L14 7 M16 11 L19 7" stroke="#ddd" stroke-width="2.2"/><path d="M2 6 L19 1 L20 3.5 L3 8.5Z" fill="#222"/><path d="M4 6.8 L7 5 M9 5.3 L12 3.5 M14 3.8 L17 2" stroke="#e8e8e8" stroke-width="2.2"/><circle cx="4.5" cy="9" r="2" fill="#ccc"/></svg></span> [CHAIN DEAL] Starting purchase animation for offer ${<span class="tv">offerIndex</span>}`);</span></div>
<div class="cl"><span class="ln">529</span><span class="cx"></span></div>
<div class="cl"><span class="ln">530</span><span class="cx">    <span class="tk">const</span> <span class="td">currentOffer</span> = <span class="tf">window</span>.<span class="tf">balancy</span>?.<span class="tf">findDomElement</span>(`offer-${<span class="tv">offerIndex</span>}`, <span class="tv">containerElement</span>);</span></div>
<div class="cl"><span class="ln">531</span><span class="cx">    <span class="tk">if</span> (!<span class="tv">currentOffer</span>) {</span></div>
<div class="cl"><span class="ln">532</span><span class="cx">        <span class="tf">console</span>.<span class="tf">error</span>(`Could not find offer-${<span class="tv">offerIndex</span>}`);</span></div>
<div class="cl"><span class="ln">533</span><span class="cx">        <span class="tk">return</span>;</span></div>
<div class="cl"><span class="ln">534</span><span class="cx">    }</span></div>
<div class="cl"><span class="ln">535</span><span class="cx"></span></div>
<div class="cl"><span class="ln">536</span><span class="cx">    <span class="tk">const</span> <span class="td">itemIcons</span> = <span class="tv">currentOffer</span>.<span class="tf">querySelectorAll</span>(<span class="ts">&#x27;[data-id=&quot;item&quot;]&#x27;</span>);</span></div>
<div class="cl"><span class="ln">537</span><span class="cx">    <span class="tk">const</span> <span class="td">finished</span> = [];</span></div>
<div class="cl"><span class="ln">538</span><span class="cx">    <span class="tk">for</span> (<span class="tk">const</span> <span class="td">itemIcon</span> <span class="tk">of</span> <span class="tv">itemIcons</span>) {</span></div>
<div class="cl"><span class="ln">539</span><span class="cx">        <span class="tf">createChainDealFlyingReward</span>(<span class="tv">itemIcon</span>, () =&gt; {</span></div>
<div class="cl"><span class="ln">540</span><span class="cx">            <span class="tk">if</span> (!<span class="tv">finished</span>.<span class="tf">includes</span>(<span class="tv">itemIcon</span>)) <span class="tv">finished</span>.<span class="tf">push</span>(<span class="tv">itemIcon</span>);</span></div>
<div class="cl"><span class="ln">541</span><span class="cx">            <span class="tk">if</span> (<span class="tv">finished</span>.<span class="tf">length</span> === <span class="tv">itemIcons</span>.<span class="tf">length</span>) {</span></div>
<div class="cl"><span class="ln">542</span><span class="cx">                <span class="tf">console</span>.<span class="tf">log</span>(`<span class="em"><svg width="22" height="22" viewBox="0 0 22 22"><rect x="1" y="1" width="20" height="20" rx="4" fill="#5cb338"/><path d="M5.5 11.5 L9.5 15.5 L16.5 6.5" stroke="#fff" stroke-width="3" fill="none" stroke-linecap="round" stroke-linejoin="round"/></svg></span> [CHAIN DEAL] All flying rewards finished for offer ${<span class="tv">offerIndex</span>}`);</span></div>
<div class="cl"><span class="ln">543</span><span class="cx">                <span class="tk">if</span> (<span class="tv">onEnd</span>) <span class="tv">onEnd</span>();</span></div>
<div class="cl"><span class="ln">544</span><span class="cx">            }</span></div>
<div class="cl"><span class="ln">545</span><span class="cx">        });</span></div>
<div class="cl"><span class="ln">546</span><span class="cx">    }</span></div>
<div class="cl"><span class="ln">547</span><span class="cx">}</span></div>
<div class="cl"><span class="ln">548</span><span class="cx"></span></div>
<div class="cl"><span class="ln">549</span><span class="cx"><span class="tc">// Setup initial state - show only first 3 items, disable locked items</span></span></div>
<div class="cl"><span class="ln">550</span><span class="cx"><span class="tk">function</span> <span class="td">setupChainDealInitialState</span>(<span class="td">containerElement</span>, <span class="td">currentUnlockedIndex</span>) {</span></div>
<div class="cl"><span class="ln">551</span><span class="cx">    <span class="tk">const</span> <span class="td">totalOffers</span> = <span class="tv">containerElement</span>.<span class="tf">querySelectorAll</span>(<span class="ts">&#x27;[data-id^=&quot;offer-&quot;]&#x27;</span>).<span class="tf">length</span>;</span></div>
<div class="cl"><span class="ln">552</span><span class="cx"></span></div>
<div class="cl"><span class="ln">553</span><span class="cx">    <span class="tf">console</span>.<span class="tf">log</span>(`<span class="em"><svg width="23" height="22" viewBox="0 0 23 22"><path d="M8.5 9 L20.5 19.5" stroke="#8a8a90" stroke-width="3" stroke-linecap="round"/><path d="M8.5 9 L20.5 19.5" stroke="#b8c0c8" stroke-width="1.4" stroke-linecap="round"/><path d="M4.2 2.2 Q0.5 5.5 3 9 Q6.5 12 10 9 Q12.5 5.5 9.5 1.5 L8.5 4.5 L6 5.5Z" fill="#b0c4d4"/></svg></span> [CHAIN DEAL] Setting up initial state - unlocked: ${<span class="tv">currentUnlockedIndex</span>}, total:</span></div>
<div class="cl"><span class="ln"></span><span class="cx">${<span class="tv">totalOffers</span>}`);</span></div>
<div class="cl"><span class="ln">554</span><span class="cx"></span></div>
<div class="cl"><span class="ln">555</span><span class="cx">    <span class="tv">containerElement</span>.<span class="tf">style</span>.<span class="tf">width</span> = <span class="ts">&#x27;calc(40vh + 1rem)&#x27;</span>;</span></div>
<div class="cl"><span class="ln">556</span><span class="cx"></span></div>
<div class="cl"><span class="ln">557</span><span class="cx">    <span class="tf">console</span>.<span class="tf">log</span>(<span class="ts">&#x27;&gt;UNLOCKED&#x27;</span>, <span class="tv">currentUnlockedIndex</span>);</span></div>
<div class="cl"><span class="ln">558</span><span class="cx">    <span class="tk">for</span> (<span class="tk">let</span> <span class="td">i</span> = <span class="tn">0</span>; <span class="tv">i</span> &lt; <span class="tv">totalOffers</span>; <span class="tv">i</span>++) {</span></div>
<div class="cl"><span class="ln">559</span><span class="cx">        <span class="tk">const</span> <span class="td">offer</span> = <span class="tf">balancy</span>.<span class="tf">findDomElement</span>(`offer-${<span class="tv">i</span>}`, <span class="tv">containerElement</span>);</span></div>
<div class="cl"><span class="ln">560</span><span class="cx">        <span class="tk">if</span> (!<span class="tv">offer</span>) <span class="tk">continue</span>;</span></div>
<div class="cl"><span class="ln">561</span><span class="cx"></span></div>
<div class="cl"><span class="ln">562</span><span class="cx">        <span class="tk">const</span> <span class="td">button</span> = <span class="tf">balancy</span>.<span class="tf">findDomElement</span>(<span class="ts">&#x27;claim-button&#x27;</span>, <span class="tv">offer</span>);</span></div>
<div class="cl"><span class="ln">563</span><span class="cx">        <span class="tk">const</span> <span class="td">lockIcon</span> = <span class="tf">balancy</span>.<span class="tf">findDomElement</span>(<span class="ts">&#x27;lock&#x27;</span>, <span class="tv">offer</span>);</span></div>
<div class="cl"><span class="ln">564</span><span class="cx">        <span class="tk">const</span> <span class="td">checkMark</span> = <span class="tf">balancy</span>.<span class="tf">findDomElement</span>(<span class="ts">&#x27;check-mark&#x27;</span>, <span class="tv">offer</span>);</span></div>
<div class="cl"><span class="ln">565</span><span class="cx">        <span class="tk">if</span> (<span class="tv">checkMark</span>) <span class="tv">checkMark</span>.<span class="tf">style</span>.<span class="tf">display</span> = <span class="ts">&#x27;none&#x27;</span>;</span></div>
<div class="cl"><span class="ln">566</span><span class="cx"></span></div>
<div class="cl"><span class="ln">567</span><span class="cx">        <span class="tk">if</span> (<span class="tv">i</span> &lt; <span class="tv">currentUnlockedIndex</span>) {</span></div>
<div class="cl"><span class="ln">568</span><span class="cx">            <span class="tc">// Already claimed items - hide them</span></span></div>
<div class="cl"><span class="ln">569</span><span class="cx">            <span class="tk">if</span> (<span class="tv">i</span> + <span class="tn">3</span> &lt; <span class="tv">totalOffers</span>) <span class="tv">offer</span>.<span class="tf">style</span>.<span class="tf">display</span> = <span class="ts">&#x27;none&#x27;</span>;</span></div>
<div class="cl"><span class="ln">570</span><span class="cx">            <span class="tv">offer</span>.<span class="tf">classList</span>.<span class="tf">add</span>(<span class="tC">CLAIMED_OFFER_CLASS</span>);</span></div>
<div class="cl"><span class="ln">571</span><span class="cx">            <span class="tk">if</span> (<span class="tv">checkMark</span>) <span class="tv">checkMark</span>.<span class="tf">style</span>.<span class="tf">display</span> = <span class="ts">&#x27;block&#x27;</span>;</span></div>
<div class="cl"><span class="ln">572</span><span class="cx">            <span class="tv">button</span>.<span class="tf">style</span>.<span class="tf">opacity</span> = <span class="tn">0</span>;</span></div>
<div class="cl"><span class="ln">573</span><span class="cx">        } <span class="tk">else</span> <span class="tk">if</span> (<span class="tv">i</span> &lt; <span class="tv">currentUnlockedIndex</span> + <span class="tn">3</span>) {</span></div>
<div class="cl"><span class="ln">574</span><span class="cx">            <span class="tc">// Show this item (current, current+1, ..., current+5)</span></span></div>
<div class="cl"><span class="ln">575</span><span class="cx">            <span class="tv">offer</span>.<span class="tf">style</span>.<span class="tf">display</span> = <span class="ts">&#x27;flex&#x27;</span>;</span></div>
<div class="cl"><span class="ln">576</span><span class="cx"></span></div>
<div class="cl"><span class="ln">577</span><span class="cx">            <span class="tk">if</span> (<span class="tv">i</span> === <span class="tv">currentUnlockedIndex</span>) {</span></div>
<div class="cl"><span class="ln">578</span><span class="cx">                <span class="tc">// Current unlocked item - enable button and hide lock</span></span></div>
    </div>
    <div id="cscroll"></div><div id="cthumb"></div>
  </div>
  <div id="save">Save</div>
</div>
</body></html>
